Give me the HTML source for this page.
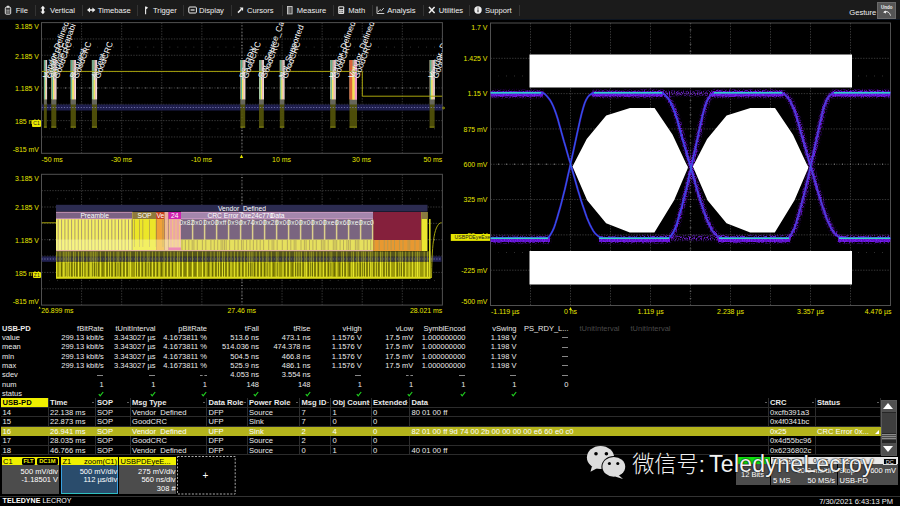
<!DOCTYPE html><html><head><meta charset="utf-8"><title>USB-PD</title><style>
*{margin:0;padding:0;box-sizing:border-box}
html,body{width:900px;height:506px;overflow:hidden;background:#000}
body{position:relative;font-family:"Liberation Sans","Noto Sans CJK SC",sans-serif;font-size:7.5px;color:#e8e8e8;line-height:1}
.a{position:absolute;white-space:nowrap}
.tb{position:absolute;left:0;top:0;width:900px;height:20px;background:#1b1b1b;border-bottom:1px solid #0c1420}
.tb span{position:absolute;top:5.5px;font-size:7.6px;color:#f0f0f0;white-space:nowrap;line-height:9px}
.tb i{position:absolute;top:5px;width:1px;height:11px;background:#333}
.yl{position:absolute;color:#e6e600;font-size:6.95px;line-height:9px;white-space:nowrap}
.r{text-align:right}
.m{position:absolute;font-size:7.5px;line-height:9.33px;white-space:nowrap;color:#eaeaea}
.t{position:absolute;font-size:7.6px;line-height:9.2px;white-space:nowrap;color:#eaeaea}
</style></head><body>
<div class="tb">
<span style="left:15.7px">File</span>
<span style="left:50px">Vertical</span>
<span style="left:97.7px">Timebase</span>
<span style="left:153px">Trigger</span>
<span style="left:199px">Display</span>
<span style="left:247px">Cursors</span>
<span style="left:296.7px">Measure</span>
<span style="left:348.3px">Math</span>
<span style="left:387.3px">Analysis</span>
<span style="left:438.7px">Utilities</span>
<span style="left:485px">Support</span>
<i style="left:34.8px"></i>
<i style="left:82.3px"></i>
<i style="left:137.3px"></i>
<i style="left:183.3px"></i>
<i style="left:230.7px"></i>
<i style="left:281.7px"></i>
<i style="left:333.3px"></i>
<i style="left:371.7px"></i>
<i style="left:423.3px"></i>
<i style="left:469.3px"></i>
<i style="left:519.3px"></i>
<span style="left:849.3px;top:7.5px">Gesture</span>
<div class="a" style="left:877px;top:2px;width:19px;height:17px;background:#555;border:1px solid #6a6a6a"></div>
<span style="left:881px;top:5.2px;font-size:4.5px;line-height:5px;font-weight:bold">Undo</span>
<svg class="a" style="left:0;top:0" width="900" height="20" viewBox="0 0 900 20">
<rect x="5.3" y="7.2" width="5.4" height="7" rx="1" fill="#3a3a3a" stroke="#ddd" stroke-width="1"/><rect x="6.6" y="5.8" width="2.8" height="1.8" rx="0.5" fill="#ddd"/><path d="M6.4 10.2h3.2M6.4 12h3.2" stroke="#ccc" stroke-width="0.8"/>
<path d="M42.9 5.8 L45.3 8.6 H43.9 V11.4 H45.3 L42.9 14.2 L40.5 11.4 H41.9 V8.6 H40.5 Z" fill="#f2f2f2"/>
<path d="M87 10 L90 7.6 V9.3 H92.4 V7.6 L95.4 10 L92.4 12.4 V10.7 H90 V12.4 Z" fill="#eee"/>
<path d="M145.6 14.2 V6.4" fill="none" stroke="#eee" stroke-width="1.1"/><path d="M146 6.4 L148.2 7.8 L146 9.2 Z" fill="#eee"/>
<rect x="188.8" y="7" width="7.6" height="6" rx="1" fill="none" stroke="#eee" stroke-width="1"/><rect x="190.6" y="9.4" width="4" height="1.2" fill="#eee"/>
<path d="M238 12.6 L241.4 9.2" stroke="#eee" stroke-width="1.6"/><path d="M239.6 7.6 L243.2 7.4 L243 11 Z" fill="#eee"/>
<rect x="287.5" y="6.5" width="4.6" height="7.4" fill="#555" stroke="#ccc" stroke-width="0.9"/><path d="M288 8h1.6M288 10h1.6M288 12h1.6" stroke="#ccc" stroke-width="0.7"/>
<rect x="338.2" y="6.2" width="6" height="7.8" rx="1" fill="#ddd"/><rect x="339.3" y="7.3" width="3.8" height="1.8" fill="#222"/><path d="M339.4 10.6h3.6M339.4 12.4h3.6" stroke="#222" stroke-width="0.8" stroke-dasharray="0.9 0.45"/>
<path d="M377 6.5 V13.5 H384.3" fill="none" stroke="#ddd" stroke-width="0.9"/><path d="M378 12 L380 9.6 L381.4 10.8 L383.8 8" fill="none" stroke="#ddd" stroke-width="0.9"/>
<path d="M429 7 L434.6 13 M434.6 7 L429 13" stroke="#eee" stroke-width="1.5"/>
<circle cx="478" cy="10" r="3.7" fill="#eee"/><rect x="477.5" y="9.4" width="1" height="2.8" fill="#222"/><rect x="477.5" y="7.6" width="1" height="1" fill="#222"/>
<path d="M884 12 C886.8 10.9 889.6 11.9 890.5 15.6" fill="none" stroke="#eee" stroke-width="1"/><path d="M883 12.3 L886 10.6 L886 13.4 Z" fill="#eee"/>
</svg>
</div>
<svg class="a" style="left:0;top:0" width="900" height="506" viewBox="0 0 900 506">
<defs>
<clipPath id="c1"><rect x="41.5" y="22.6" width="400.9" height="130.7"/></clipPath>
<clipPath id="c2"><rect x="41.5" y="174.3" width="400.9" height="130.8"/></clipPath>
<clipPath id="c3"><rect x="490.5" y="23" width="400" height="282.5"/></clipPath>
<filter id="bl" x="-5%" y="-5%" width="110%" height="110%"><feGaussianBlur stdDeviation="0.7"/></filter>
<filter id="sp" x="-5%" y="-5%" width="110%" height="110%"><feGaussianBlur stdDeviation="0.9" result="b"/><feTurbulence type="fractalNoise" baseFrequency="0.85" numOctaves="1" seed="4" result="n"/><feColorMatrix in="n" type="matrix" values="0 0 0 0 0  0 0 0 0 0  0 0 0 0 0  0 0 0 5 -2.2" result="m"/><feComposite in="b" in2="m" operator="in"/></filter>
</defs>
<path d="M81.59 22.6 V153.29999999999998" stroke="#363636" stroke-width="1" stroke-dasharray="1.4 1.3"/><path d="M121.68 22.6 V153.29999999999998" stroke="#363636" stroke-width="1" stroke-dasharray="1.4 1.3"/><path d="M161.77 22.6 V153.29999999999998" stroke="#363636" stroke-width="1" stroke-dasharray="1.4 1.3"/><path d="M201.86 22.6 V153.29999999999998" stroke="#363636" stroke-width="1" stroke-dasharray="1.4 1.3"/><path d="M241.95 22.6 V153.29999999999998" stroke="#363636" stroke-width="1" stroke-dasharray="1.4 1.3"/><path d="M282.04 22.6 V153.29999999999998" stroke="#363636" stroke-width="1" stroke-dasharray="1.4 1.3"/><path d="M322.13 22.6 V153.29999999999998" stroke="#363636" stroke-width="1" stroke-dasharray="1.4 1.3"/><path d="M362.22 22.6 V153.29999999999998" stroke="#363636" stroke-width="1" stroke-dasharray="1.4 1.3"/><path d="M402.31 22.6 V153.29999999999998" stroke="#363636" stroke-width="1" stroke-dasharray="1.4 1.3"/><path d="M41.5 38.94 H442.4" stroke="#363636" stroke-width="1" stroke-dasharray="1.4 1.3"/><path d="M41.5 55.27 H442.4" stroke="#363636" stroke-width="1" stroke-dasharray="1.4 1.3"/><path d="M41.5 71.61 H442.4" stroke="#363636" stroke-width="1" stroke-dasharray="1.4 1.3"/><path d="M41.5 87.95 H442.4" stroke="#363636" stroke-width="1" stroke-dasharray="1.4 1.3"/><path d="M41.5 104.29 H442.4" stroke="#363636" stroke-width="1" stroke-dasharray="1.4 1.3"/><path d="M41.5 120.62 H442.4" stroke="#363636" stroke-width="1" stroke-dasharray="1.4 1.3"/><path d="M41.5 136.96 H442.4" stroke="#363636" stroke-width="1" stroke-dasharray="1.4 1.3"/><path d="M41.5 87.95 H442.4" stroke="#6a6a6a" stroke-width="1.6" stroke-dasharray="0.9 7.12" stroke-dashoffset="0.45"/><path d="M241.95 22.6 V153.29999999999998" stroke="#6a6a6a" stroke-width="1.6" stroke-dasharray="0.9 2.37" stroke-dashoffset="0.45"/><path d="M49.52 47.11 H441.4" stroke="#3c3c3c" stroke-width="0.9" stroke-dasharray="0.9 7.12" stroke-dashoffset="0.45"/><path d="M49.52 128.79 H441.4" stroke="#3c3c3c" stroke-width="0.9" stroke-dasharray="0.9 7.12" stroke-dashoffset="0.45"/><rect x="41.5" y="22.6" width="400.9" height="130.7" fill="none" stroke="#505050" stroke-width="1"/>
<g clip-path="url(#c1)">
<rect x="41.5" y="104.5" width="401" height="6" fill="#1e1e4c"/>
<rect x="43.9" y="100" width="2.9" height="27.5" fill="#58580a" opacity="0.88"/>
<rect x="43.9" y="126.6" width="2.9" height="1" fill="#8c8c14"/>
<rect x="43.9" y="60" width="2.9" height="39.6" fill="#e9dfb4"/>
<rect x="43.9" y="60" width="2.9" height="11" fill="#8a947a" opacity="0.75"/>
<rect x="44.6" y="80" width="1.2" height="19.6" fill="#f2e868"/>
<rect x="45.7" y="60" width="0.9" height="39.6" fill="#f0b4c4" opacity="0.9"/>
<rect x="44.2" y="60" width="0.9" height="39.6" fill="#48b090"/>
<rect x="46.5" y="60" width="0.6" height="39.6" fill="#fff" opacity="0.8"/>
<rect x="43.9" y="99.6" width="2.9" height="4.9" fill="#66665c"/>
<rect x="51.3" y="100" width="5.0" height="27.5" fill="#58580a" opacity="0.88"/>
<rect x="51.3" y="126.6" width="5.0" height="1" fill="#8c8c14"/>
<rect x="51.3" y="60" width="5.0" height="39.6" fill="#e9dfb4"/>
<rect x="51.3" y="60" width="5.0" height="11" fill="#8a947a" opacity="0.75"/>
<rect x="52.5" y="80" width="2.0" height="19.6" fill="#f2e868"/>
<rect x="54.4" y="60" width="1.5" height="39.6" fill="#f0b4c4" opacity="0.9"/>
<rect x="51.9" y="60" width="0.9" height="39.6" fill="#48b090"/>
<rect x="55.8" y="60" width="0.6" height="39.6" fill="#fff" opacity="0.8"/>
<rect x="51.3" y="99.6" width="5.0" height="4.9" fill="#66665c"/>
<rect x="70.6" y="100" width="5.3" height="27.5" fill="#58580a" opacity="0.88"/>
<rect x="70.6" y="126.6" width="5.3" height="1" fill="#8c8c14"/>
<rect x="70.6" y="60" width="5.3" height="39.6" fill="#e9dfb4"/>
<rect x="70.6" y="60" width="5.3" height="11" fill="#8a947a" opacity="0.75"/>
<rect x="71.9" y="80" width="2.1" height="19.6" fill="#f2e868"/>
<rect x="73.9" y="60" width="1.6" height="39.6" fill="#f0b4c4" opacity="0.9"/>
<rect x="71.2" y="60" width="0.9" height="39.6" fill="#48b090"/>
<rect x="75.4" y="60" width="0.6" height="39.6" fill="#fff" opacity="0.8"/>
<rect x="70.6" y="99.6" width="5.3" height="4.9" fill="#66665c"/>
<rect x="91.9" y="100" width="5.1" height="27.5" fill="#58580a" opacity="0.88"/>
<rect x="91.9" y="126.6" width="5.1" height="1" fill="#8c8c14"/>
<rect x="91.9" y="60" width="5.1" height="39.6" fill="#e9dfb4"/>
<rect x="91.9" y="60" width="5.1" height="11" fill="#8a947a" opacity="0.75"/>
<rect x="93.2" y="80" width="2.0" height="19.6" fill="#f2e868"/>
<rect x="95.1" y="60" width="1.5" height="39.6" fill="#f0b4c4" opacity="0.9"/>
<rect x="92.5" y="60" width="0.9" height="39.6" fill="#48b090"/>
<rect x="96.5" y="60" width="0.6" height="39.6" fill="#fff" opacity="0.8"/>
<rect x="91.9" y="99.6" width="5.1" height="4.9" fill="#66665c"/>
<rect x="240.4" y="100" width="4.8" height="27.5" fill="#58580a" opacity="0.88"/>
<rect x="240.4" y="126.6" width="4.8" height="1" fill="#8c8c14"/>
<rect x="240.4" y="60" width="4.8" height="39.6" fill="#e9dfb4"/>
<rect x="240.4" y="60" width="4.8" height="11" fill="#8a947a" opacity="0.75"/>
<rect x="241.6" y="80" width="1.9" height="19.6" fill="#f2e868"/>
<rect x="243.4" y="60" width="1.4" height="39.6" fill="#f0b4c4" opacity="0.9"/>
<rect x="241.0" y="60" width="0.9" height="39.6" fill="#48b090"/>
<rect x="244.7" y="60" width="0.6" height="39.6" fill="#fff" opacity="0.8"/>
<rect x="240.4" y="99.6" width="4.8" height="4.9" fill="#66665c"/>
<rect x="259" y="100" width="4.8" height="27.5" fill="#58580a" opacity="0.88"/>
<rect x="259" y="126.6" width="4.8" height="1" fill="#8c8c14"/>
<rect x="259" y="60" width="4.8" height="39.6" fill="#e9dfb4"/>
<rect x="259" y="60" width="4.8" height="11" fill="#8a947a" opacity="0.75"/>
<rect x="260.2" y="80" width="1.9" height="19.6" fill="#f2e868"/>
<rect x="262.0" y="60" width="1.4" height="39.6" fill="#f0b4c4" opacity="0.9"/>
<rect x="259.6" y="60" width="0.9" height="39.6" fill="#48b090"/>
<rect x="263.3" y="60" width="0.6" height="39.6" fill="#fff" opacity="0.8"/>
<rect x="259" y="99.6" width="4.8" height="4.9" fill="#66665c"/>
<rect x="279.8" y="100" width="4.5" height="27.5" fill="#58580a" opacity="0.88"/>
<rect x="279.8" y="126.6" width="4.5" height="1" fill="#8c8c14"/>
<rect x="279.8" y="60" width="4.5" height="39.6" fill="#e9dfb4"/>
<rect x="279.8" y="60" width="4.5" height="11" fill="#8a947a" opacity="0.75"/>
<rect x="280.9" y="80" width="1.8" height="19.6" fill="#f2e868"/>
<rect x="282.6" y="60" width="1.3" height="39.6" fill="#f0b4c4" opacity="0.9"/>
<rect x="280.3" y="60" width="0.9" height="39.6" fill="#48b090"/>
<rect x="283.9" y="60" width="0.6" height="39.6" fill="#fff" opacity="0.8"/>
<rect x="279.8" y="99.6" width="4.5" height="4.9" fill="#66665c"/>
<rect x="330.2" y="100" width="5.4" height="27.5" fill="#58580a" opacity="0.88"/>
<rect x="330.2" y="126.6" width="5.4" height="1" fill="#8c8c14"/>
<rect x="330.2" y="60" width="5.4" height="39.6" fill="#e9dfb4"/>
<rect x="330.2" y="60" width="5.4" height="11" fill="#8a947a" opacity="0.75"/>
<rect x="331.6" y="80" width="2.2" height="19.6" fill="#f2e868"/>
<rect x="333.5" y="60" width="1.6" height="39.6" fill="#f0b4c4" opacity="0.9"/>
<rect x="330.8" y="60" width="0.9" height="39.6" fill="#48b090"/>
<rect x="335.1" y="60" width="0.6" height="39.6" fill="#fff" opacity="0.8"/>
<rect x="330.2" y="99.6" width="5.4" height="4.9" fill="#66665c"/>
<rect x="349.5" y="100" width="7.5" height="27.5" fill="#58580a" opacity="0.88"/>
<rect x="349.5" y="126.6" width="7.5" height="1" fill="#8c8c14"/>
<rect x="349.5" y="60" width="7.5" height="39.6" fill="#e9dfb4"/>
<rect x="349.5" y="60" width="7.5" height="11" fill="#8a947a" opacity="0.75"/>
<rect x="351.4" y="80" width="3.0" height="19.6" fill="#f2e868"/>
<rect x="354.1" y="60" width="2.2" height="39.6" fill="#f0b4c4" opacity="0.9"/>
<rect x="350.4" y="60" width="0.9" height="39.6" fill="#48b090"/>
<rect x="356.2" y="60" width="0.6" height="39.6" fill="#fff" opacity="0.8"/>
<rect x="349.5" y="99.6" width="7.5" height="4.9" fill="#66665c"/>
<rect x="429.6" y="100" width="5.0" height="27.5" fill="#58580a" opacity="0.88"/>
<rect x="429.6" y="126.6" width="5.0" height="1" fill="#8c8c14"/>
<rect x="429.6" y="60" width="5.0" height="39.6" fill="#e9dfb4"/>
<rect x="429.6" y="60" width="5.0" height="11" fill="#8a947a" opacity="0.75"/>
<rect x="430.9" y="80" width="2.0" height="19.6" fill="#f2e868"/>
<rect x="432.7" y="60" width="1.5" height="39.6" fill="#f0b4c4" opacity="0.9"/>
<rect x="430.2" y="60" width="0.9" height="39.6" fill="#48b090"/>
<rect x="434.1" y="60" width="0.6" height="39.6" fill="#fff" opacity="0.8"/>
<rect x="429.6" y="99.6" width="5.0" height="4.9" fill="#66665c"/>
<rect x="349.5" y="60" width="3" height="39.6" fill="#e45a30" opacity="0.9"/>
<rect x="352.5" y="66" width="2.3" height="33.6" fill="#f4e050"/>
<rect x="354.8" y="60" width="2.2" height="39.6" fill="#f08cc0" opacity="0.9"/>
<path d="M41.5 107.5 H442.4" stroke="#8080bc" stroke-width="0.8" stroke-dasharray="1.2 1.6"/>
<path d="M41.5 71.4 H362.3 V96.2 H442.4" fill="none" stroke="#a8a40c" stroke-width="1"/>
<text x="48.1" y="79" transform="rotate(-69.5 48.1 79)" font-size="8.4" fill="#fff" stroke="#000" stroke-width="0.2" paint-order="stroke">Vendor_Defined</text>
<text x="50.6" y="79" transform="rotate(-69.5 50.6 79)" font-size="8.4" fill="#fff" stroke="#000" stroke-width="0.2" paint-order="stroke">GoodCRC</text>
<text x="55.6" y="79" transform="rotate(-69.5 55.6 79)" font-size="8.4" fill="#fff" stroke="#000" stroke-width="0.2" paint-order="stroke">Source_Capabi</text>
<text x="58.6" y="79" transform="rotate(-69.5 58.6 79)" font-size="8.4" fill="#fff" stroke="#000" stroke-width="0.2" paint-order="stroke">GoodCRC</text>
<text x="75.1" y="79" transform="rotate(-69.5 75.1 79)" font-size="8.4" fill="#fff" stroke="#000" stroke-width="0.2" paint-order="stroke">Request</text>
<text x="78.1" y="79" transform="rotate(-69.5 78.1 79)" font-size="8.4" fill="#fff" stroke="#000" stroke-width="0.2" paint-order="stroke">GoodCRC</text>
<text x="96.6" y="79" transform="rotate(-69.5 96.6 79)" font-size="8.4" fill="#fff" stroke="#000" stroke-width="0.2" paint-order="stroke">Accept</text>
<text x="99.6" y="79" transform="rotate(-69.5 99.6 79)" font-size="8.4" fill="#fff" stroke="#000" stroke-width="0.2" paint-order="stroke">GoodCRC</text>
<text x="244.6" y="79" transform="rotate(-69.5 244.6 79)" font-size="8.4" fill="#fff" stroke="#000" stroke-width="0.2" paint-order="stroke">PS_RDY</text>
<text x="247.6" y="79" transform="rotate(-69.5 247.6 79)" font-size="8.4" fill="#fff" stroke="#000" stroke-width="0.2" paint-order="stroke">GoodCRC</text>
<text x="263.1" y="79" transform="rotate(-69.5 263.1 79)" font-size="8.4" fill="#fff" stroke="#000" stroke-width="0.2" paint-order="stroke">Get_Source_Ca</text>
<text x="266.1" y="79" transform="rotate(-69.5 266.1 79)" font-size="8.4" fill="#fff" stroke="#000" stroke-width="0.2" paint-order="stroke">GoodCRC</text>
<text x="284.1" y="79" transform="rotate(-69.5 284.1 79)" font-size="8.4" fill="#fff" stroke="#000" stroke-width="0.2" paint-order="stroke">Not_Supported</text>
<text x="287.1" y="79" transform="rotate(-69.5 287.1 79)" font-size="8.4" fill="#fff" stroke="#000" stroke-width="0.2" paint-order="stroke">GoodCRC</text>
<text x="334.6" y="79" transform="rotate(-69.5 334.6 79)" font-size="8.4" fill="#fff" stroke="#000" stroke-width="0.2" paint-order="stroke">Vendor_Defined</text>
<text x="338.1" y="79" transform="rotate(-69.5 338.1 79)" font-size="8.4" fill="#fff" stroke="#000" stroke-width="0.2" paint-order="stroke">GoodCRC</text>
<text x="353.6" y="79" transform="rotate(-69.5 353.6 79)" font-size="8.4" fill="#fff" stroke="#000" stroke-width="0.2" paint-order="stroke">Vendor_Defined</text>
<text x="358.6" y="79" transform="rotate(-69.5 358.6 79)" font-size="8.4" fill="#fff" stroke="#000" stroke-width="0.2" paint-order="stroke">GoodCRC</text>
<text x="433.6" y="79" transform="rotate(-69.5 433.6 79)" font-size="8.4" fill="#fff" stroke="#000" stroke-width="0.2" paint-order="stroke">Vendor_Defined</text>
<text x="437.6" y="79" transform="rotate(-69.5 437.6 79)" font-size="8.4" fill="#fff" stroke="#000" stroke-width="0.2" paint-order="stroke">GoodCRC</text>
</g>
<path d="M241.5 154.6 L243.2 158 H239.8 Z" fill="#e6e600"/>
<circle cx="443.6" cy="108" r="0.9" fill="none" stroke="#e6e600" stroke-width="0.6"/>
<path d="M81.59 174.3 V305.1" stroke="#363636" stroke-width="1" stroke-dasharray="1.4 1.3"/><path d="M121.68 174.3 V305.1" stroke="#363636" stroke-width="1" stroke-dasharray="1.4 1.3"/><path d="M161.77 174.3 V305.1" stroke="#363636" stroke-width="1" stroke-dasharray="1.4 1.3"/><path d="M201.86 174.3 V305.1" stroke="#363636" stroke-width="1" stroke-dasharray="1.4 1.3"/><path d="M241.95 174.3 V305.1" stroke="#363636" stroke-width="1" stroke-dasharray="1.4 1.3"/><path d="M282.04 174.3 V305.1" stroke="#363636" stroke-width="1" stroke-dasharray="1.4 1.3"/><path d="M322.13 174.3 V305.1" stroke="#363636" stroke-width="1" stroke-dasharray="1.4 1.3"/><path d="M362.22 174.3 V305.1" stroke="#363636" stroke-width="1" stroke-dasharray="1.4 1.3"/><path d="M402.31 174.3 V305.1" stroke="#363636" stroke-width="1" stroke-dasharray="1.4 1.3"/><path d="M41.5 190.65 H442.4" stroke="#363636" stroke-width="1" stroke-dasharray="1.4 1.3"/><path d="M41.5 207.00 H442.4" stroke="#363636" stroke-width="1" stroke-dasharray="1.4 1.3"/><path d="M41.5 223.35 H442.4" stroke="#363636" stroke-width="1" stroke-dasharray="1.4 1.3"/><path d="M41.5 239.70 H442.4" stroke="#363636" stroke-width="1" stroke-dasharray="1.4 1.3"/><path d="M41.5 256.05 H442.4" stroke="#363636" stroke-width="1" stroke-dasharray="1.4 1.3"/><path d="M41.5 272.40 H442.4" stroke="#363636" stroke-width="1" stroke-dasharray="1.4 1.3"/><path d="M41.5 288.75 H442.4" stroke="#363636" stroke-width="1" stroke-dasharray="1.4 1.3"/><path d="M41.5 239.70 H442.4" stroke="#6a6a6a" stroke-width="1.6" stroke-dasharray="0.9 7.12" stroke-dashoffset="0.45"/><path d="M241.95 174.3 V305.1" stroke="#6a6a6a" stroke-width="1.6" stroke-dasharray="0.9 2.37" stroke-dashoffset="0.45"/><path d="M49.52 198.83 H441.4" stroke="#3c3c3c" stroke-width="0.9" stroke-dasharray="0.9 7.12" stroke-dashoffset="0.45"/><path d="M49.52 280.58 H441.4" stroke="#3c3c3c" stroke-width="0.9" stroke-dasharray="0.9 7.12" stroke-dashoffset="0.45"/><rect x="41.5" y="174.3" width="400.9" height="130.8" fill="none" stroke="#505050" stroke-width="1"/>
<g clip-path="url(#c2)">
<path d="M41.5 222.8 H56" stroke="#a8a40c" stroke-width="1"/>
<rect x="41.5" y="256.4" width="400" height="5.4" fill="#212152"/>
<path d="M41.5 259 H441.5" stroke="#8c8cc4" stroke-width="0.8" stroke-dasharray="1.2 1.6"/>
<rect x="56" y="251.2" width="374.5" height="5.4" fill="#55551a"/>
<rect x="56" y="256.4" width="374.5" height="5.4" fill="#55551e" opacity="0.5"/>
<rect x="56" y="261.8" width="374.5" height="16.8" fill="#9a980a"/>
<path d="M56.6 251.5 V262 M60.0 251.5 V262 M63.3 251.5 V262 M65.0 251.5 V262 M66.7 251.5 V262 M68.4 251.5 V262 M70.1 251.5 V262 M73.5 251.5 V262 M75.2 251.5 V262 M78.5 251.5 V262 M81.8 251.5 V262 M83.5 251.5 V262 M86.9 251.5 V262 M90.2 251.5 V262 M91.9 251.5 V262 M93.6 251.5 V262 M95.3 251.5 V262 M97.0 251.5 V262 M100.4 251.5 V262 M105.4 251.5 V262 M108.7 251.5 V262 M110.4 251.5 V262 M113.8 251.5 V262 M117.1 251.5 V262 M118.8 251.5 V262 M122.2 251.5 V262 M125.5 251.5 V262 M128.9 251.5 V262 M130.6 251.5 V262 M135.6 251.5 V262 M137.3 251.5 V262 M140.6 251.5 V262 M144.0 251.5 V262 M147.3 251.5 V262 M149.0 251.5 V262 M152.4 251.5 V262 M155.7 251.5 V262 M159.1 251.5 V262 M164.1 251.5 V262 M167.4 251.5 V262 M170.8 251.5 V262 M174.1 251.5 V262 M177.5 251.5 V262 M179.2 251.5 V262 M182.5 251.5 V262 M187.5 251.5 V262 M192.5 251.5 V262 M197.5 251.5 V262 M202.5 251.5 V262 M205.9 251.5 V262 M210.9 251.5 V262 M214.2 251.5 V262 M217.6 251.5 V262 M219.3 251.5 V262 M222.6 251.5 V262 M224.3 251.5 V262 M227.7 251.5 V262 M231.0 251.5 V262 M234.4 251.5 V262 M237.7 251.5 V262 M241.1 251.5 V262 M244.4 251.5 V262 M247.8 251.5 V262 M249.5 251.5 V262 M251.2 251.5 V262 M252.9 251.5 V262 M256.2 251.5 V262 M259.6 251.5 V262 M262.9 251.5 V262 M266.3 251.5 V262 M268.0 251.5 V262 M271.3 251.5 V262 M276.3 251.5 V262 M278.0 251.5 V262 M283.0 251.5 V262 M286.4 251.5 V262 M289.7 251.5 V262 M294.7 251.5 V262 M296.4 251.5 V262 M298.1 251.5 V262 M299.8 251.5 V262 M301.5 251.5 V262 M304.9 251.5 V262 M306.6 251.5 V262 M309.9 251.5 V262 M311.6 251.5 V262 M313.3 251.5 V262 M316.7 251.5 V262 M320.0 251.5 V262 M323.4 251.5 V262 M326.7 251.5 V262 M330.1 251.5 V262 M331.8 251.5 V262 M336.8 251.5 V262 M341.8 251.5 V262 M343.5 251.5 V262 M346.8 251.5 V262 M351.8 251.5 V262 M353.5 251.5 V262 M356.9 251.5 V262 M358.6 251.5 V262 M361.9 251.5 V262 M363.6 251.5 V262 M365.3 251.5 V262 M368.7 251.5 V262 M370.4 251.5 V262 M372.1 251.5 V262 M375.4 251.5 V262 M377.1 251.5 V262 M380.5 251.5 V262 M382.2 251.5 V262 M385.6 251.5 V262 M387.2 251.5 V262 M390.6 251.5 V262 M395.6 251.5 V262 M399.0 251.5 V262 M400.7 251.5 V262 M402.4 251.5 V262 M405.7 251.5 V262 M409.1 251.5 V262 M412.4 251.5 V262 M415.8 251.5 V262 M417.5 251.5 V262 M419.2 251.5 V262 M424.2 251.5 V262 M427.5 251.5 V262" stroke="#d8d828" stroke-width="0.7" opacity="0.7"/>
<path d="M56.6 262 V278 M60.0 262 V278 M63.3 262 V278 M65.0 262 V278 M66.7 262 V278 M68.4 262 V278 M70.1 262 V278 M73.5 262 V278 M75.2 262 V278 M78.5 262 V278 M81.8 262 V278 M83.5 262 V278 M86.9 262 V278 M90.2 262 V278 M91.9 262 V278 M93.6 262 V278 M95.3 262 V278 M97.0 262 V278 M100.4 262 V278 M105.4 262 V278 M108.7 262 V278 M110.4 262 V278 M113.8 262 V278 M117.1 262 V278 M118.8 262 V278 M122.2 262 V278 M125.5 262 V278 M128.9 262 V278 M130.6 262 V278 M135.6 262 V278 M137.3 262 V278 M140.6 262 V278 M144.0 262 V278 M147.3 262 V278 M149.0 262 V278 M152.4 262 V278 M155.7 262 V278 M159.1 262 V278 M164.1 262 V278 M167.4 262 V278 M170.8 262 V278 M174.1 262 V278 M177.5 262 V278 M179.2 262 V278 M182.5 262 V278 M187.5 262 V278 M192.5 262 V278 M197.5 262 V278 M202.5 262 V278 M205.9 262 V278 M210.9 262 V278 M214.2 262 V278 M217.6 262 V278 M219.3 262 V278 M222.6 262 V278 M224.3 262 V278 M227.7 262 V278 M231.0 262 V278 M234.4 262 V278 M237.7 262 V278 M241.1 262 V278 M244.4 262 V278 M247.8 262 V278 M249.5 262 V278 M251.2 262 V278 M252.9 262 V278 M256.2 262 V278 M259.6 262 V278 M262.9 262 V278 M266.3 262 V278 M268.0 262 V278 M271.3 262 V278 M276.3 262 V278 M278.0 262 V278 M283.0 262 V278 M286.4 262 V278 M289.7 262 V278 M294.7 262 V278 M296.4 262 V278 M298.1 262 V278 M299.8 262 V278 M301.5 262 V278 M304.9 262 V278 M306.6 262 V278 M309.9 262 V278 M311.6 262 V278 M313.3 262 V278 M316.7 262 V278 M320.0 262 V278 M323.4 262 V278 M326.7 262 V278 M330.1 262 V278 M331.8 262 V278 M336.8 262 V278 M341.8 262 V278 M343.5 262 V278 M346.8 262 V278 M351.8 262 V278 M353.5 262 V278 M356.9 262 V278 M358.6 262 V278 M361.9 262 V278 M363.6 262 V278 M365.3 262 V278 M368.7 262 V278 M370.4 262 V278 M372.1 262 V278 M375.4 262 V278 M377.1 262 V278 M380.5 262 V278 M382.2 262 V278 M385.6 262 V278 M387.2 262 V278 M390.6 262 V278 M395.6 262 V278 M399.0 262 V278 M400.7 262 V278 M402.4 262 V278 M405.7 262 V278 M409.1 262 V278 M412.4 262 V278 M415.8 262 V278 M417.5 262 V278 M419.2 262 V278 M424.2 262 V278 M427.5 262 V278" stroke="#f0f030" stroke-width="1" opacity="0.9"/>
<path d="M61.6 262.5 V276.4 M65.8 262.5 V276.4 M69.2 262.5 V276.4 M71.8 262.5 V276.4 M74.3 262.5 V276.4 M76.8 262.5 V276.4 M80.2 262.5 V276.4 M82.7 262.5 V276.4 M88.6 262.5 V276.4 M92.8 262.5 V276.4 M94.5 262.5 V276.4 M96.2 262.5 V276.4 M98.7 262.5 V276.4 M102.9 262.5 V276.4 M107.1 262.5 V276.4 M109.6 262.5 V276.4 M112.1 262.5 V276.4 M115.5 262.5 V276.4 M118.0 262.5 V276.4 M120.5 262.5 V276.4 M123.9 262.5 V276.4 M127.2 262.5 V276.4 M136.4 262.5 V276.4 M139.0 262.5 V276.4 M142.3 262.5 V276.4 M145.7 262.5 V276.4 M148.2 262.5 V276.4 M150.7 262.5 V276.4 M154.1 262.5 V276.4 M157.4 262.5 V276.4 M161.6 262.5 V276.4 M165.8 262.5 V276.4 M169.1 262.5 V276.4 M172.5 262.5 V276.4 M180.9 262.5 V276.4 M185.0 262.5 V276.4 M190.0 262.5 V276.4 M195.0 262.5 V276.4 M204.2 262.5 V276.4 M208.4 262.5 V276.4 M212.6 262.5 V276.4 M215.9 262.5 V276.4 M218.4 262.5 V276.4 M221.0 262.5 V276.4 M223.5 262.5 V276.4 M226.0 262.5 V276.4 M229.4 262.5 V276.4 M239.4 262.5 V276.4 M242.8 262.5 V276.4 M248.6 262.5 V276.4 M250.3 262.5 V276.4 M252.0 262.5 V276.4 M254.6 262.5 V276.4 M257.9 262.5 V276.4 M261.3 262.5 V276.4 M264.6 262.5 V276.4 M267.1 262.5 V276.4 M273.8 262.5 V276.4 M277.2 262.5 V276.4 M284.7 262.5 V276.4 M288.1 262.5 V276.4 M292.2 262.5 V276.4 M295.6 262.5 V276.4 M297.3 262.5 V276.4 M299.0 262.5 V276.4 M300.7 262.5 V276.4 M303.2 262.5 V276.4 M308.3 262.5 V276.4 M310.8 262.5 V276.4 M312.5 262.5 V276.4 M315.0 262.5 V276.4 M318.4 262.5 V276.4 M325.1 262.5 V276.4 M328.4 262.5 V276.4 M330.9 262.5 V276.4 M334.3 262.5 V276.4 M339.3 262.5 V276.4 M342.6 262.5 V276.4 M345.2 262.5 V276.4 M349.3 262.5 V276.4 M357.8 262.5 V276.4 M360.3 262.5 V276.4 M362.8 262.5 V276.4 M364.5 262.5 V276.4 M367.0 262.5 V276.4 M369.6 262.5 V276.4 M373.8 262.5 V276.4 M376.3 262.5 V276.4 M378.8 262.5 V276.4 M383.9 262.5 V276.4 M386.4 262.5 V276.4 M388.9 262.5 V276.4 M397.3 262.5 V276.4 M399.8 262.5 V276.4 M401.5 262.5 V276.4 M404.0 262.5 V276.4" stroke="#4c4c02" stroke-width="0.8" opacity="0.85"/>
<rect x="56" y="276.8" width="374.5" height="1.8" fill="#dcdc1c"/>
<rect x="56" y="204.8" width="371.5" height="6.8" fill="#2b2b50"/>
<rect x="56" y="212" width="76.5" height="39" fill="#f4f062"/>
<rect x="56" y="211.8" width="76.5" height="7.4" fill="#e0a4c4"/><rect x="56" y="212.6" width="76.5" height="5.8" fill="#7c6284"/>
<rect x="132.5" y="212" width="23.7" height="39" fill="#ece628"/>
<rect x="132.5" y="212" width="23.7" height="7" fill="#8f7a3c"/>
<rect x="156.2" y="212" width="8.3" height="39" fill="#f0a038"/>
<rect x="156.2" y="212" width="8.3" height="7" fill="#c8401c"/>
<rect x="164.5" y="212" width="4" height="39" fill="#eeb0a0"/>
<rect x="168.5" y="212" width="12.5" height="39" fill="#eca4a8"/>
<rect x="168.5" y="212" width="12.5" height="7" fill="#d020b0"/>
<rect x="168.5" y="247.5" width="12.5" height="3.5" fill="#e030c0"/>
<rect x="181" y="212" width="192.2" height="39" fill="#7a6580"/>
<rect x="181" y="211.8" width="192.2" height="7.4" fill="#d8a0c8"/><rect x="181" y="212.6" width="192.2" height="5.8" fill="#a486ac"/>
<rect x="373.2" y="212" width="48.1" height="39" fill="#85203c"/>
<rect x="421.3" y="212" width="6.2" height="39" fill="#ece630"/>
<rect x="421.3" y="212" width="6.2" height="7" fill="#8a7a40"/>
<path d="M58.2 219.5 V250 M61.6 219.5 V250 M64.9 219.5 V250 M68.2 219.5 V250 M71.6 219.5 V250 M74.9 219.5 V250 M78.3 219.5 V250 M81.6 219.5 V250 M85.0 219.5 V250 M88.3 219.5 V250 M91.7 219.5 V250 M95.0 219.5 V250 M98.4 219.5 V250 M101.7 219.5 V250 M105.1 219.5 V250 M108.4 219.5 V250 M111.8 219.5 V250 M115.1 219.5 V250 M118.5 219.5 V250 M121.8 219.5 V250 M125.2 219.5 V250 M128.5 219.5 V250 M131.9 219.5 V250" stroke="#9c8470" stroke-width="0.8"/>
<path d="M134.5 219.5 V247 M139.5 219.5 V247 M142.8 219.5 V247 M149.5 219.5 V247 M156.2 219.5 V247 M162.9 219.5 V247" stroke="#a08a50" stroke-width="0.6"/>
<path d="M166.0 219.5 V247 M169.3 219.5 V247 M172.7 219.5 V247 M176.0 219.5 V247 M179.4 219.5 V247" stroke="#f0d070" stroke-width="0.8"/>
<rect x="56" y="239.5" width="125" height="10.5" fill="#fbfba8" opacity="0.45"/>
<rect x="181" y="239.5" width="192.2" height="10.7" fill="#e6e05e"/>
<rect x="373.2" y="240" width="48.1" height="11" fill="#e89830"/>
<path d="M182.0 240 V250 M185.4 240 V250 M188.8 240 V250 M192.2 240 V250 M193.9 240 V250 M197.3 240 V250 M202.4 240 V250 M205.8 240 V250 M210.9 240 V250 M214.3 240 V250 M217.7 240 V250 M221.1 240 V250 M222.8 240 V250 M224.5 240 V250 M226.2 240 V250 M229.6 240 V250 M234.7 240 V250 M238.1 240 V250 M241.5 240 V250 M243.2 240 V250 M246.6 240 V250 M250.0 240 V250 M253.4 240 V250 M256.8 240 V250 M260.2 240 V250 M263.6 240 V250 M268.7 240 V250 M272.1 240 V250 M273.8 240 V250 M277.2 240 V250 M282.3 240 V250 M287.4 240 V250 M290.8 240 V250 M294.2 240 V250 M295.9 240 V250 M301.0 240 V250 M304.4 240 V250 M306.1 240 V250 M309.5 240 V250 M312.9 240 V250 M316.3 240 V250 M321.4 240 V250 M323.1 240 V250 M324.8 240 V250 M328.2 240 V250 M333.3 240 V250 M335.0 240 V250 M336.7 240 V250 M340.1 240 V250 M343.5 240 V250 M346.9 240 V250 M348.6 240 V250 M350.3 240 V250 M355.4 240 V250 M357.1 240 V250 M358.8 240 V250 M363.9 240 V250 M367.3 240 V250 M370.7 240 V250 M374.1 240 V250 M379.2 240 V250 M384.3 240 V250 M387.7 240 V250 M391.1 240 V250 M394.5 240 V250 M399.6 240 V250 M403.0 240 V250 M408.1 240 V250 M409.8 240 V250 M414.9 240 V250 M420.0 240 V250" stroke="#a89858" stroke-width="0.7"/>
<path d="M192.6 219.5 V240 M204.6 219.5 V240 M216.6 219.5 V240 M228.6 219.5 V240 M240.6 219.5 V240 M252.6 219.5 V240 M264.6 219.5 V240 M276.6 219.5 V240 M288.6 219.5 V240 M300.6 219.5 V240 M312.6 219.5 V240 M324.6 219.5 V240 M336.6 219.5 V240 M348.6 219.5 V240 M360.6 219.5 V240 M372.6 219.5 V240" stroke="#dccf8c" stroke-width="1.5"/>
<rect x="56" y="250" width="317.2" height="1.2" fill="#e2b4a0"/>
<path d="M429.8 219 V278" stroke="#d8d820" stroke-width="1.6"/>
<path d="M431.5 278 C432 250 433 224 441.5 222.6" fill="none" stroke="#b8b410" stroke-width="0.9"/>
<text x="242" y="210.5" font-size="6.7" fill="#fff" text-anchor="middle">Vendor_Defined</text>
<text x="94.7" y="218.2" font-size="6.7" fill="#fff" text-anchor="middle">Preamble</text>
<text x="144.5" y="218.2" font-size="6.7" fill="#fff" text-anchor="middle">SOP</text>
<text x="160.4" y="218.2" font-size="6.7" fill="#fff" text-anchor="middle">Ve</text>
<text x="174.8" y="218.2" font-size="6.7" fill="#fff" text-anchor="middle">24</text>
<text x="240.3" y="218.2" font-size="6.7" fill="#fff" text-anchor="middle">CRC Error 0xe24c770</text>
<text x="277.5" y="218.2" font-size="6.7" fill="#fff" text-anchor="middle">Data</text>
<text x="179.6" y="225.4" font-size="6.7" fill="#fff" stroke="#222" stroke-width="0.2" paint-order="stroke">0x82</text>
<text x="191.6" y="225.4" font-size="6.7" fill="#fff" stroke="#222" stroke-width="0.2" paint-order="stroke">0x01</text>
<text x="203.6" y="225.4" font-size="6.7" fill="#fff" stroke="#222" stroke-width="0.2" paint-order="stroke">0x00</text>
<text x="215.6" y="225.4" font-size="6.7" fill="#fff" stroke="#222" stroke-width="0.2" paint-order="stroke">0xff</text>
<text x="227.6" y="225.4" font-size="6.7" fill="#fff" stroke="#222" stroke-width="0.2" paint-order="stroke">0x9d</text>
<text x="239.6" y="225.4" font-size="6.7" fill="#fff" stroke="#222" stroke-width="0.2" paint-order="stroke">0x74</text>
<text x="251.6" y="225.4" font-size="6.7" fill="#fff" stroke="#222" stroke-width="0.2" paint-order="stroke">0x00</text>
<text x="263.6" y="225.4" font-size="6.7" fill="#fff" stroke="#222" stroke-width="0.2" paint-order="stroke">0x2b</text>
<text x="275.6" y="225.4" font-size="6.7" fill="#fff" stroke="#222" stroke-width="0.2" paint-order="stroke">0x00</text>
<text x="287.6" y="225.4" font-size="6.7" fill="#fff" stroke="#222" stroke-width="0.2" paint-order="stroke">0x00</text>
<text x="299.6" y="225.4" font-size="6.7" fill="#fff" stroke="#222" stroke-width="0.2" paint-order="stroke">0x00</text>
<text x="311.6" y="225.4" font-size="6.7" fill="#fff" stroke="#222" stroke-width="0.2" paint-order="stroke">0x00</text>
<text x="323.6" y="225.4" font-size="6.7" fill="#fff" stroke="#222" stroke-width="0.2" paint-order="stroke">0xe6</text>
<text x="335.6" y="225.4" font-size="6.7" fill="#fff" stroke="#222" stroke-width="0.2" paint-order="stroke">0x60</text>
<text x="347.6" y="225.4" font-size="6.7" fill="#fff" stroke="#222" stroke-width="0.2" paint-order="stroke">0xe0</text>
<text x="359.6" y="225.4" font-size="6.7" fill="#fff" stroke="#222" stroke-width="0.2" paint-order="stroke">0xc0</text>
</g>
<path d="M39.6 306.4 L40.6 308.4 H38.6 Z" fill="#e6e600"/>
<path d="M530.50 23 V305.5" stroke="#363636" stroke-width="1" stroke-dasharray="1.4 1.3"/><path d="M570.50 23 V305.5" stroke="#363636" stroke-width="1" stroke-dasharray="1.4 1.3"/><path d="M610.50 23 V305.5" stroke="#363636" stroke-width="1" stroke-dasharray="1.4 1.3"/><path d="M650.50 23 V305.5" stroke="#363636" stroke-width="1" stroke-dasharray="1.4 1.3"/><path d="M690.50 23 V305.5" stroke="#363636" stroke-width="1" stroke-dasharray="1.4 1.3"/><path d="M730.50 23 V305.5" stroke="#363636" stroke-width="1" stroke-dasharray="1.4 1.3"/><path d="M770.50 23 V305.5" stroke="#363636" stroke-width="1" stroke-dasharray="1.4 1.3"/><path d="M810.50 23 V305.5" stroke="#363636" stroke-width="1" stroke-dasharray="1.4 1.3"/><path d="M850.50 23 V305.5" stroke="#363636" stroke-width="1" stroke-dasharray="1.4 1.3"/><path d="M490.5 58.31 H890.5" stroke="#363636" stroke-width="1" stroke-dasharray="1.4 1.3"/><path d="M490.5 93.62 H890.5" stroke="#363636" stroke-width="1" stroke-dasharray="1.4 1.3"/><path d="M490.5 128.94 H890.5" stroke="#363636" stroke-width="1" stroke-dasharray="1.4 1.3"/><path d="M490.5 164.25 H890.5" stroke="#363636" stroke-width="1" stroke-dasharray="1.4 1.3"/><path d="M490.5 199.56 H890.5" stroke="#363636" stroke-width="1" stroke-dasharray="1.4 1.3"/><path d="M490.5 234.88 H890.5" stroke="#363636" stroke-width="1" stroke-dasharray="1.4 1.3"/><path d="M490.5 270.19 H890.5" stroke="#363636" stroke-width="1" stroke-dasharray="1.4 1.3"/><path d="M490.5 164.25 H890.5" stroke="#6a6a6a" stroke-width="1.6" stroke-dasharray="0.9 7.10" stroke-dashoffset="0.45"/><path d="M690.50 23 V305.5" stroke="#6a6a6a" stroke-width="1.6" stroke-dasharray="0.9 6.16" stroke-dashoffset="0.45"/><path d="M498.50 75.97 H889.5" stroke="#3c3c3c" stroke-width="0.9" stroke-dasharray="0.9 7.10" stroke-dashoffset="0.45"/><path d="M498.50 252.53 H889.5" stroke="#3c3c3c" stroke-width="0.9" stroke-dasharray="0.9 7.10" stroke-dashoffset="0.45"/><rect x="490.5" y="23" width="400" height="282.5" fill="none" stroke="#505050" stroke-width="1"/>
<g clip-path="url(#c3)">
<path d="M490.5 93.94999999999999 H543 M490.5 239.4 H550 M592 93.94999999999999 H663 M599 239.4 H670 M712 93.94999999999999 H783 M718 239.4 H790 M832 93.94999999999999 H890.5 M838 239.4 H890.5" fill="none" stroke="#6612dc" stroke-width="5" opacity="0.9" filter="url(#bl)"/>
<path d="M661 93.14999999999999 H722 M661 238.0 H728" fill="none" stroke="#7a20e8" stroke-width="4.5" filter="url(#sp)"/>
<path d="M490.5 92.8 L541.0 92.8 L542.5 92.9 L544.1 93.5 L545.6 94.8 L547.1 96.4 L548.7 98.3 L550.2 100.3 L551.7 103.0 L553.3 106.4 L554.8 110.2 L556.3 114.4 L557.9 119.4 L559.4 125.0 L561.0 130.7 L562.5 136.1 L564.0 141.5 L565.6 146.8 L567.1 152.2 L568.6 157.5 L570.2 162.7 L571.7 168.0 L573.2 173.4 L574.8 178.8 L576.3 184.3 L577.8 189.6 L579.4 194.8 L580.9 199.8 L582.4 204.5 L584.0 209.2 L585.5 213.7 L587.0 217.9 L588.6 221.7 L590.1 225.0 L591.7 228.1 L593.2 230.8 L594.7 232.9 L596.3 234.5 L597.8 235.8 L599.3 236.9 L600.9 237.5 L602.4 237.8 L603.9 238.1 L605.5 238.2 L607.0 238.3 L661.6 238.3 L663.1 238.3 L664.7 238.2 L666.2 238.1 L667.7 238.0 L669.3 237.7 L670.8 236.3 L672.3 233.9 L673.9 231.0 L675.4 227.8 L676.9 223.3 L678.5 218.1 L680.0 212.9 L681.6 207.4 L683.1 201.7 L684.6 195.7 L686.2 189.5 L687.7 183.0 L689.2 176.2 L690.8 169.3 L692.3 162.4 L693.8 155.4 L695.4 148.2 L696.9 141.1 L698.4 134.1 L700.0 126.8 L701.5 119.9 L703.0 113.7 L704.6 107.9 L706.1 103.1 L707.6 99.7 L709.2 97.0 L710.7 95.3 L712.3 94.2 L713.8 93.3 L715.3 92.9 L716.9 92.8 L718.4 92.8 L719.9 92.8 L721.5 92.8 L723.0 92.8 L724.5 92.8 L726.1 92.8 L727.6 92.8 L780.5 92.8 L782.0 92.9 L783.5 93.5 L785.1 94.8 L786.6 96.4 L788.1 98.3 L789.7 100.3 L791.2 103.0 L792.7 106.4 L794.3 110.2 L795.8 114.4 L797.3 119.4 L798.9 125.0 L800.4 130.7 L801.9 136.1 L803.5 141.5 L805.0 146.8 L806.5 152.2 L808.1 157.5 L809.6 162.7 L811.1 168.0 L812.7 173.4 L814.2 178.8 L815.8 184.3 L817.3 189.6 L818.8 194.8 L820.4 199.8 L821.9 204.5 L823.4 209.2 L825.0 213.7 L826.5 217.9 L828.0 221.7 L829.6 225.0 L831.1 228.1 L832.6 230.8 L834.2 232.9 L835.7 234.5 L837.2 235.8 L838.8 236.9 L840.3 237.5 L841.8 237.8 L843.4 238.1 L844.9 238.2 L846.5 238.3 L890.5 238.3 M490.5 238.3 L540.2 238.3 L541.7 238.3 L543.3 238.2 L544.8 238.1 L546.3 238.0 L547.9 237.7 L549.4 236.3 L550.9 233.9 L552.5 231.0 L554.0 227.8 L555.5 223.3 L557.1 218.1 L558.6 212.9 L560.2 207.4 L561.7 201.7 L563.2 195.7 L564.8 189.5 L566.3 183.0 L567.8 176.2 L569.4 169.3 L570.9 162.4 L572.4 155.4 L574.0 148.2 L575.5 141.1 L577.0 134.1 L578.6 126.8 L580.1 119.9 L581.6 113.7 L583.2 107.9 L584.7 103.1 L586.2 99.7 L587.8 97.0 L589.3 95.3 L590.9 94.2 L592.4 93.3 L593.9 92.9 L595.5 92.8 L597.0 92.8 L598.5 92.8 L600.1 92.8 L601.6 92.8 L603.1 92.8 L604.7 92.8 L606.2 92.8 L660.2 92.8 L661.7 92.9 L663.3 93.5 L664.8 94.8 L666.3 96.4 L667.9 98.3 L669.4 100.3 L670.9 103.0 L672.5 106.4 L674.0 110.2 L675.5 114.4 L677.1 119.4 L678.6 125.0 L680.2 130.7 L681.7 136.1 L683.2 141.5 L684.8 146.8 L686.3 152.2 L687.8 157.5 L689.4 162.7 L690.9 168.0 L692.4 173.4 L694.0 178.8 L695.5 184.3 L697.0 189.6 L698.6 194.8 L700.1 199.8 L701.6 204.5 L703.2 209.2 L704.7 213.7 L706.2 217.9 L707.8 221.7 L709.3 225.0 L710.9 228.1 L712.4 230.8 L713.9 232.9 L715.5 234.5 L717.0 235.8 L718.5 236.9 L720.1 237.5 L721.6 237.8 L723.1 238.1 L724.7 238.2 L726.2 238.3 L780.8 238.3 L782.3 238.3 L783.8 238.2 L785.4 238.1 L786.9 238.0 L788.4 237.7 L790.0 236.3 L791.5 233.9 L793.0 231.0 L794.6 227.8 L796.1 223.3 L797.6 218.1 L799.2 212.9 L800.7 207.4 L802.2 201.7 L803.8 195.7 L805.3 189.5 L806.8 183.0 L808.4 176.2 L809.9 169.3 L811.4 162.4 L813.0 155.4 L814.5 148.2 L816.1 141.1 L817.6 134.1 L819.1 126.8 L820.7 119.9 L822.2 113.7 L823.7 107.9 L825.3 103.1 L826.8 99.7 L828.3 97.0 L829.9 95.3 L831.4 94.2 L832.9 93.3 L834.5 92.9 L836.0 92.8 L837.5 92.8 L839.1 92.8 L840.6 92.8 L842.1 92.8 L843.7 92.8 L845.2 92.8 L846.8 92.8 L890.5 92.8" fill="none" stroke="#5a14c8" stroke-width="2.1" opacity="0.8" filter="url(#bl)"/>
<path d="M606.0 238.3 L660.6 238.3 L662.1 238.3 L663.7 238.2 L665.2 238.1 L666.7 238.0 L668.3 237.7 L669.8 236.3 L671.3 233.9 L672.9 231.0 L674.4 227.8 L675.9 223.3 L677.5 218.1 L679.0 212.9 L680.6 207.4 L682.1 201.7 L683.6 195.7 L685.2 189.5 L686.7 183.0 L688.2 176.2 L689.8 169.3 L691.3 162.4 L692.8 155.4 L694.4 148.2 L695.9 141.1 L697.4 134.1 L699.0 126.8 L700.5 119.9 L702.0 113.7 L703.6 107.9 L705.1 103.1 L706.6 99.7 L708.2 97.0 L709.7 95.3 L711.3 94.2 L712.8 93.3 L714.3 92.9 L715.9 92.8 L717.4 92.8 L718.9 92.8 L720.5 92.8 L722.0 92.8 L723.5 92.8 L725.1 92.8 L726.6 92.8 L779.5 92.8 L781.0 92.9 L782.5 93.5 L784.1 94.8 L785.6 96.4 L787.1 98.3 L788.7 100.3 L790.2 103.0 L791.7 106.4 L793.3 110.2 L794.8 114.4 L796.3 119.4 L797.9 125.0 L799.4 130.7 L800.9 136.1 L802.5 141.5 L804.0 146.8 L805.5 152.2 L807.1 157.5 L808.6 162.7 L810.1 168.0 L811.7 173.4 L813.2 178.8 L814.8 184.3 L816.3 189.6 L817.8 194.8 L819.4 199.8 L820.9 204.5 L822.4 209.2 L824.0 213.7 L825.5 217.9 L827.0 221.7 L828.6 225.0 L830.1 228.1 L831.6 230.8 L833.2 232.9 L834.7 234.5 L836.2 235.8 L837.8 236.9 L839.3 237.5 L840.8 237.8 L842.4 238.1 L843.9 238.2 L845.5 238.3 L890.5 238.3 M606.0 92.8 L659.2 92.8 L660.7 92.9 L662.3 93.5 L663.8 94.8 L665.3 96.4 L666.9 98.3 L668.4 100.3 L669.9 103.0 L671.5 106.4 L673.0 110.2 L674.5 114.4 L676.1 119.4 L677.6 125.0 L679.2 130.7 L680.7 136.1 L682.2 141.5 L683.8 146.8 L685.3 152.2 L686.8 157.5 L688.4 162.7 L689.9 168.0 L691.4 173.4 L693.0 178.8 L694.5 184.3 L696.0 189.6 L697.6 194.8 L699.1 199.8 L700.6 204.5 L702.2 209.2 L703.7 213.7 L705.2 217.9 L706.8 221.7 L708.3 225.0 L709.9 228.1 L711.4 230.8 L712.9 232.9 L714.5 234.5 L716.0 235.8 L717.5 236.9 L719.1 237.5 L720.6 237.8 L722.1 238.1 L723.7 238.2 L725.2 238.3 L779.8 238.3 L781.3 238.3 L782.8 238.2 L784.4 238.1 L785.9 238.0 L787.4 237.7 L789.0 236.3 L790.5 233.9 L792.0 231.0 L793.6 227.8 L795.1 223.3 L796.6 218.1 L798.2 212.9 L799.7 207.4 L801.2 201.7 L802.8 195.7 L804.3 189.5 L805.8 183.0 L807.4 176.2 L808.9 169.3 L810.4 162.4 L812.0 155.4 L813.5 148.2 L815.1 141.1 L816.6 134.1 L818.1 126.8 L819.7 119.9 L821.2 113.7 L822.7 107.9 L824.3 103.1 L825.8 99.7 L827.3 97.0 L828.9 95.3 L830.4 94.2 L831.9 93.3 L833.5 92.9 L835.0 92.8 L836.5 92.8 L838.1 92.8 L839.6 92.8 L841.1 92.8 L842.7 92.8 L844.2 92.8 L845.8 92.8 L890.5 92.8" fill="none" stroke="#6418d0" stroke-width="1.1" opacity="0.4" filter="url(#bl)"/>
<path d="M606.0 238.3 L662.8 238.3 L664.3 238.3 L665.9 238.2 L667.4 238.1 L668.9 238.0 L670.5 237.7 L672.0 236.3 L673.5 233.9 L675.1 231.0 L676.6 227.8 L678.1 223.3 L679.7 218.1 L681.2 212.9 L682.8 207.4 L684.3 201.7 L685.8 195.7 L687.4 189.5 L688.9 183.0 L690.4 176.2 L692.0 169.3 L693.5 162.4 L695.0 155.4 L696.6 148.2 L698.1 141.1 L699.6 134.1 L701.2 126.8 L702.7 119.9 L704.2 113.7 L705.8 107.9 L707.3 103.1 L708.8 99.7 L710.4 97.0 L711.9 95.3 L713.5 94.2 L715.0 93.3 L716.5 92.9 L718.1 92.8 L719.6 92.8 L721.1 92.8 L722.7 92.8 L724.2 92.8 L725.7 92.8 L727.3 92.8 L728.8 92.8 L781.7 92.8 L783.2 92.9 L784.7 93.5 L786.3 94.8 L787.8 96.4 L789.3 98.3 L790.9 100.3 L792.4 103.0 L793.9 106.4 L795.5 110.2 L797.0 114.4 L798.5 119.4 L800.1 125.0 L801.6 130.7 L803.1 136.1 L804.7 141.5 L806.2 146.8 L807.7 152.2 L809.3 157.5 L810.8 162.7 L812.3 168.0 L813.9 173.4 L815.4 178.8 L817.0 184.3 L818.5 189.6 L820.0 194.8 L821.6 199.8 L823.1 204.5 L824.6 209.2 L826.2 213.7 L827.7 217.9 L829.2 221.7 L830.8 225.0 L832.3 228.1 L833.8 230.8 L835.4 232.9 L836.9 234.5 L838.4 235.8 L840.0 236.9 L841.5 237.5 L843.0 237.8 L844.6 238.1 L846.1 238.2 L847.7 238.3 L890.5 238.3 M606.0 92.8 L661.4 92.8 L662.9 92.9 L664.5 93.5 L666.0 94.8 L667.5 96.4 L669.1 98.3 L670.6 100.3 L672.1 103.0 L673.7 106.4 L675.2 110.2 L676.7 114.4 L678.3 119.4 L679.8 125.0 L681.4 130.7 L682.9 136.1 L684.4 141.5 L686.0 146.8 L687.5 152.2 L689.0 157.5 L690.6 162.7 L692.1 168.0 L693.6 173.4 L695.2 178.8 L696.7 184.3 L698.2 189.6 L699.8 194.8 L701.3 199.8 L702.8 204.5 L704.4 209.2 L705.9 213.7 L707.4 217.9 L709.0 221.7 L710.5 225.0 L712.1 228.1 L713.6 230.8 L715.1 232.9 L716.7 234.5 L718.2 235.8 L719.7 236.9 L721.3 237.5 L722.8 237.8 L724.3 238.1 L725.9 238.2 L727.4 238.3 L782.0 238.3 L783.5 238.3 L785.0 238.2 L786.6 238.1 L788.1 238.0 L789.6 237.7 L791.2 236.3 L792.7 233.9 L794.2 231.0 L795.8 227.8 L797.3 223.3 L798.8 218.1 L800.4 212.9 L801.9 207.4 L803.4 201.7 L805.0 195.7 L806.5 189.5 L808.0 183.0 L809.6 176.2 L811.1 169.3 L812.6 162.4 L814.2 155.4 L815.7 148.2 L817.3 141.1 L818.8 134.1 L820.3 126.8 L821.9 119.9 L823.4 113.7 L824.9 107.9 L826.5 103.1 L828.0 99.7 L829.5 97.0 L831.1 95.3 L832.6 94.2 L834.1 93.3 L835.7 92.9 L837.2 92.8 L838.7 92.8 L840.3 92.8 L841.8 92.8 L843.3 92.8 L844.9 92.8 L846.4 92.8 L848.0 92.8 L890.5 92.8" fill="none" stroke="#6418d0" stroke-width="1.1" opacity="0.4" filter="url(#bl)"/>
<path d="M640.0 238.3 L662.1 238.3 L663.6 238.3 L665.2 238.2 L666.7 238.1 L668.2 238.0 L669.8 237.7 L671.3 236.3 L672.8 233.9 L674.4 231.0 L675.9 227.8 L677.4 223.3 L679.0 218.1 L680.5 212.9 L682.1 207.4 L683.6 201.7 L685.1 195.7 L686.7 189.5 L688.2 183.0 L689.7 176.2 L691.3 169.3 L692.8 162.4 L694.3 155.4 L695.9 148.2 L697.4 141.1 L698.9 134.1 L700.5 126.8 L702.0 119.9 L703.5 113.7 L705.1 107.9 L706.6 103.1 L708.1 99.7 L709.7 97.0 L711.2 95.3 L712.8 94.2 L714.3 93.3 L715.8 92.9 L717.4 92.8 L718.9 92.8 L720.4 92.8 L722.0 92.8 L723.5 92.8 L725.0 92.8 L726.6 92.8 L728.1 92.8 L781.0 92.8 L782.5 92.9 L784.0 93.5 L785.6 94.8 L787.1 96.4 L788.6 98.3 L790.2 100.3 L791.7 103.0 L793.2 106.4 L794.8 110.2 L796.3 114.4 L797.8 119.4 L799.4 125.0 L800.9 130.7 L802.4 136.1 L804.0 141.5 L805.5 146.8 L807.0 152.2 L808.6 157.5 L810.1 162.7 L811.6 168.0 L813.2 173.4 L814.7 178.8 L816.3 184.3 L817.8 189.6 L819.3 194.8 L820.9 199.8 L822.4 204.5 L823.9 209.2 L825.5 213.7 L827.0 217.9 L828.5 221.7 L830.1 225.0 L831.6 228.1 L833.1 230.8 L834.7 232.9 L836.2 234.5 L837.7 235.8 L839.3 236.9 L840.8 237.5 L842.3 237.8 L843.9 238.1 L845.4 238.2 L847.0 238.3 L890.5 238.3 M640.0 92.8 L660.7 92.8 L662.2 92.9 L663.8 93.5 L665.3 94.8 L666.8 96.4 L668.4 98.3 L669.9 100.3 L671.4 103.0 L673.0 106.4 L674.5 110.2 L676.0 114.4 L677.6 119.4 L679.1 125.0 L680.7 130.7 L682.2 136.1 L683.7 141.5 L685.3 146.8 L686.8 152.2 L688.3 157.5 L689.9 162.7 L691.4 168.0 L692.9 173.4 L694.5 178.8 L696.0 184.3 L697.5 189.6 L699.1 194.8 L700.6 199.8 L702.1 204.5 L703.7 209.2 L705.2 213.7 L706.7 217.9 L708.3 221.7 L709.8 225.0 L711.4 228.1 L712.9 230.8 L714.4 232.9 L716.0 234.5 L717.5 235.8 L719.0 236.9 L720.6 237.5 L722.1 237.8 L723.6 238.1 L725.2 238.2 L726.7 238.3 L781.2 238.3 L782.8 238.3 L784.3 238.2 L785.9 238.1 L787.4 238.0 L788.9 237.7 L790.5 236.3 L792.0 233.9 L793.5 231.0 L795.1 227.8 L796.6 223.3 L798.1 218.1 L799.7 212.9 L801.2 207.4 L802.7 201.7 L804.3 195.7 L805.8 189.5 L807.3 183.0 L808.9 176.2 L810.4 169.3 L811.9 162.4 L813.5 155.4 L815.0 148.2 L816.6 141.1 L818.1 134.1 L819.6 126.8 L821.2 119.9 L822.7 113.7 L824.2 107.9 L825.8 103.1 L827.3 99.7 L828.8 97.0 L830.4 95.3 L831.9 94.2 L833.4 93.3 L835.0 92.9 L836.5 92.8 L838.0 92.8 L839.6 92.8 L841.1 92.8 L842.6 92.8 L844.2 92.8 L845.7 92.8 L847.2 92.8 L890.5 92.8" fill="none" stroke="#7a1cf0" stroke-width="4.6" filter="url(#sp)"/>
<path d="M490.5 93.94999999999999 H543 M490.5 239.4 H550 M592 93.94999999999999 H663 M599 239.4 H670 M712 93.94999999999999 H783 M718 239.4 H790 M832 93.94999999999999 H890.5 M838 239.4 H890.5" fill="none" stroke="#7a1cf0" stroke-width="7" filter="url(#sp)"/>
<rect x="529.5" y="54.5" width="322.5" height="33" fill="#fff"/>
<rect x="529.5" y="251" width="322.5" height="33.5" fill="#fff"/>
<polygon points="572.5,166.5 586.7,139.0 606.2,115.6 630.0,108.0 654.6,108.0 672.6,134.7 686.3,164.0 688.0,167.0 687.6,168.7 674.1,200.3 654.4,232.4 629.8,232.4 606.1,223.3 587.1,200.3" fill="#fff"/>
<polygon points="692.9,166.5 707.1,139.0 726.6,115.6 750.4,108.0 775.0,108.0 793.0,134.7 806.7,164.0 808.4,167.0 808.0,168.7 794.5,200.3 774.8,232.4 750.2,232.4 726.5,223.3 707.5,200.3" fill="#fff"/>
<linearGradient id="eg" gradientUnits="userSpaceOnUse" x1="490" y1="0" x2="890" y2="0"><stop offset="0" stop-color="#2c38f4"/><stop offset="0.45" stop-color="#2c34f0"/><stop offset="0.56" stop-color="#5222dc"/><stop offset="1" stop-color="#5a1ed6"/></linearGradient>
<path d="M490.5 92.8 L541.0 92.8 L542.5 92.9 L544.1 93.5 L545.6 94.8 L547.1 96.4 L548.7 98.3 L550.2 100.3 L551.7 103.0 L553.3 106.4 L554.8 110.2 L556.3 114.4 L557.9 119.4 L559.4 125.0 L561.0 130.7 L562.5 136.1 L564.0 141.5 L565.6 146.8 L567.1 152.2 L568.6 157.5 L570.2 162.7 L571.7 168.0 L573.2 173.4 L574.8 178.8 L576.3 184.3 L577.8 189.6 L579.4 194.8 L580.9 199.8 L582.4 204.5 L584.0 209.2 L585.5 213.7 L587.0 217.9 L588.6 221.7 L590.1 225.0 L591.7 228.1 L593.2 230.8 L594.7 232.9 L596.3 234.5 L597.8 235.8 L599.3 236.9 L600.9 237.5 L602.4 237.8 L603.9 238.1 L605.5 238.2 L607.0 238.3 L661.6 238.3 L663.1 238.3 L664.7 238.2 L666.2 238.1 L667.7 238.0 L669.3 237.7 L670.8 236.3 L672.3 233.9 L673.9 231.0 L675.4 227.8 L676.9 223.3 L678.5 218.1 L680.0 212.9 L681.6 207.4 L683.1 201.7 L684.6 195.7 L686.2 189.5 L687.7 183.0 L689.2 176.2 L690.8 169.3 L692.3 162.4 L693.8 155.4 L695.4 148.2 L696.9 141.1 L698.4 134.1 L700.0 126.8 L701.5 119.9 L703.0 113.7 L704.6 107.9 L706.1 103.1 L707.6 99.7 L709.2 97.0 L710.7 95.3 L712.3 94.2 L713.8 93.3 L715.3 92.9 L716.9 92.8 L718.4 92.8 L719.9 92.8 L721.5 92.8 L723.0 92.8 L724.5 92.8 L726.1 92.8 L727.6 92.8 L780.5 92.8 L782.0 92.9 L783.5 93.5 L785.1 94.8 L786.6 96.4 L788.1 98.3 L789.7 100.3 L791.2 103.0 L792.7 106.4 L794.3 110.2 L795.8 114.4 L797.3 119.4 L798.9 125.0 L800.4 130.7 L801.9 136.1 L803.5 141.5 L805.0 146.8 L806.5 152.2 L808.1 157.5 L809.6 162.7 L811.1 168.0 L812.7 173.4 L814.2 178.8 L815.8 184.3 L817.3 189.6 L818.8 194.8 L820.4 199.8 L821.9 204.5 L823.4 209.2 L825.0 213.7 L826.5 217.9 L828.0 221.7 L829.6 225.0 L831.1 228.1 L832.6 230.8 L834.2 232.9 L835.7 234.5 L837.2 235.8 L838.8 236.9 L840.3 237.5 L841.8 237.8 L843.4 238.1 L844.9 238.2 L846.5 238.3 L890.5 238.3 M490.5 238.3 L540.2 238.3 L541.7 238.3 L543.3 238.2 L544.8 238.1 L546.3 238.0 L547.9 237.7 L549.4 236.3 L550.9 233.9 L552.5 231.0 L554.0 227.8 L555.5 223.3 L557.1 218.1 L558.6 212.9 L560.2 207.4 L561.7 201.7 L563.2 195.7 L564.8 189.5 L566.3 183.0 L567.8 176.2 L569.4 169.3 L570.9 162.4 L572.4 155.4 L574.0 148.2 L575.5 141.1 L577.0 134.1 L578.6 126.8 L580.1 119.9 L581.6 113.7 L583.2 107.9 L584.7 103.1 L586.2 99.7 L587.8 97.0 L589.3 95.3 L590.9 94.2 L592.4 93.3 L593.9 92.9 L595.5 92.8 L597.0 92.8 L598.5 92.8 L600.1 92.8 L601.6 92.8 L603.1 92.8 L604.7 92.8 L606.2 92.8 L660.2 92.8 L661.7 92.9 L663.3 93.5 L664.8 94.8 L666.3 96.4 L667.9 98.3 L669.4 100.3 L670.9 103.0 L672.5 106.4 L674.0 110.2 L675.5 114.4 L677.1 119.4 L678.6 125.0 L680.2 130.7 L681.7 136.1 L683.2 141.5 L684.8 146.8 L686.3 152.2 L687.8 157.5 L689.4 162.7 L690.9 168.0 L692.4 173.4 L694.0 178.8 L695.5 184.3 L697.0 189.6 L698.6 194.8 L700.1 199.8 L701.6 204.5 L703.2 209.2 L704.7 213.7 L706.2 217.9 L707.8 221.7 L709.3 225.0 L710.9 228.1 L712.4 230.8 L713.9 232.9 L715.5 234.5 L717.0 235.8 L718.5 236.9 L720.1 237.5 L721.6 237.8 L723.1 238.1 L724.7 238.2 L726.2 238.3 L780.8 238.3 L782.3 238.3 L783.8 238.2 L785.4 238.1 L786.9 238.0 L788.4 237.7 L790.0 236.3 L791.5 233.9 L793.0 231.0 L794.6 227.8 L796.1 223.3 L797.6 218.1 L799.2 212.9 L800.7 207.4 L802.2 201.7 L803.8 195.7 L805.3 189.5 L806.8 183.0 L808.4 176.2 L809.9 169.3 L811.4 162.4 L813.0 155.4 L814.5 148.2 L816.1 141.1 L817.6 134.1 L819.1 126.8 L820.7 119.9 L822.2 113.7 L823.7 107.9 L825.3 103.1 L826.8 99.7 L828.3 97.0 L829.9 95.3 L831.4 94.2 L832.9 93.3 L834.5 92.9 L836.0 92.8 L837.5 92.8 L839.1 92.8 L840.6 92.8 L842.1 92.8 L843.7 92.8 L845.2 92.8 L846.8 92.8 L890.5 92.8" fill="none" stroke="url(#eg)" stroke-width="1.05"/>
<path d="M490.5 92.8 L541.0 92.8 L542.5 92.9 L544.1 93.5 L545.6 94.8 L547.1 96.4 L548.7 98.3 L550.2 100.3 L551.7 103.0 L553.3 106.4 L554.8 110.2 L556.3 114.4 L557.9 119.4 L559.4 125.0 L561.0 130.7 L562.5 136.1 L564.0 141.5 L565.6 146.8 L567.1 152.2 L568.6 157.5 L570.2 162.7 L571.7 168.0 L573.2 173.4 L574.8 178.8 L576.3 184.3 L577.8 189.6 L579.4 194.8 L580.9 199.8 L582.4 204.5 L584.0 209.2 L585.5 213.7 L587.0 217.9 L588.6 221.7 L590.1 225.0 L591.7 228.1 L593.2 230.8 L594.7 232.9 L596.3 234.5 L597.8 235.8 L599.3 236.9 L600.9 237.5 L602.4 237.8 L603.9 238.1 L605.5 238.2 L607.0 238.3 L661.6 238.3 L663.1 238.3 L664.7 238.2 L666.2 238.1 L667.7 238.0 L669.3 237.7 L670.8 236.3 L672.3 233.9 L673.9 231.0 L675.4 227.8 L676.9 223.3 L678.5 218.1 L680.0 212.9 L681.6 207.4 L683.1 201.7 L684.6 195.7 L686.2 189.5 L687.7 183.0 L689.2 176.2 L690.8 169.3 L692.3 162.4 L693.8 155.4 L695.4 148.2 L696.9 141.1 L698.4 134.1 L700.0 126.8 L701.5 119.9 L703.0 113.7 L704.6 107.9 L706.1 103.1 L707.6 99.7 L709.2 97.0 L710.7 95.3 L712.3 94.2 L713.8 93.3 L715.3 92.9 L716.9 92.8 L718.4 92.8 L719.9 92.8 L721.5 92.8 L723.0 92.8 L724.5 92.8 L726.1 92.8 L727.6 92.8 L780.5 92.8 L782.0 92.9 L783.5 93.5 L785.1 94.8 L786.6 96.4 L788.1 98.3 L789.7 100.3 L791.2 103.0 L792.7 106.4 L794.3 110.2 L795.8 114.4 L797.3 119.4 L798.9 125.0 L800.4 130.7 L801.9 136.1 L803.5 141.5 L805.0 146.8 L806.5 152.2 L808.1 157.5 L809.6 162.7 L811.1 168.0 L812.7 173.4 L814.2 178.8 L815.8 184.3 L817.3 189.6 L818.8 194.8 L820.4 199.8 L821.9 204.5 L823.4 209.2 L825.0 213.7 L826.5 217.9 L828.0 221.7 L829.6 225.0 L831.1 228.1 L832.6 230.8 L834.2 232.9 L835.7 234.5 L837.2 235.8 L838.8 236.9 L840.3 237.5 L841.8 237.8 L843.4 238.1 L844.9 238.2 L846.5 238.3 L890.5 238.3 M490.5 238.3 L540.2 238.3 L541.7 238.3 L543.3 238.2 L544.8 238.1 L546.3 238.0 L547.9 237.7 L549.4 236.3 L550.9 233.9 L552.5 231.0 L554.0 227.8 L555.5 223.3 L557.1 218.1 L558.6 212.9 L560.2 207.4 L561.7 201.7 L563.2 195.7 L564.8 189.5 L566.3 183.0 L567.8 176.2 L569.4 169.3 L570.9 162.4 L572.4 155.4 L574.0 148.2 L575.5 141.1 L577.0 134.1 L578.6 126.8 L580.1 119.9 L581.6 113.7 L583.2 107.9 L584.7 103.1 L586.2 99.7 L587.8 97.0 L589.3 95.3 L590.9 94.2 L592.4 93.3 L593.9 92.9 L595.5 92.8 L597.0 92.8 L598.5 92.8 L600.1 92.8 L601.6 92.8 L603.1 92.8 L604.7 92.8 L606.2 92.8 L660.2 92.8 L661.7 92.9 L663.3 93.5 L664.8 94.8 L666.3 96.4 L667.9 98.3 L669.4 100.3 L670.9 103.0 L672.5 106.4 L674.0 110.2 L675.5 114.4 L677.1 119.4 L678.6 125.0 L680.2 130.7 L681.7 136.1 L683.2 141.5 L684.8 146.8 L686.3 152.2 L687.8 157.5 L689.4 162.7 L690.9 168.0 L692.4 173.4 L694.0 178.8 L695.5 184.3 L697.0 189.6 L698.6 194.8 L700.1 199.8 L701.6 204.5 L703.2 209.2 L704.7 213.7 L706.2 217.9 L707.8 221.7 L709.3 225.0 L710.9 228.1 L712.4 230.8 L713.9 232.9 L715.5 234.5 L717.0 235.8 L718.5 236.9 L720.1 237.5 L721.6 237.8 L723.1 238.1 L724.7 238.2 L726.2 238.3 L780.8 238.3 L782.3 238.3 L783.8 238.2 L785.4 238.1 L786.9 238.0 L788.4 237.7 L790.0 236.3 L791.5 233.9 L793.0 231.0 L794.6 227.8 L796.1 223.3 L797.6 218.1 L799.2 212.9 L800.7 207.4 L802.2 201.7 L803.8 195.7 L805.3 189.5 L806.8 183.0 L808.4 176.2 L809.9 169.3 L811.4 162.4 L813.0 155.4 L814.5 148.2 L816.1 141.1 L817.6 134.1 L819.1 126.8 L820.7 119.9 L822.2 113.7 L823.7 107.9 L825.3 103.1 L826.8 99.7 L828.3 97.0 L829.9 95.3 L831.4 94.2 L832.9 93.3 L834.5 92.9 L836.0 92.8 L837.5 92.8 L839.1 92.8 L840.6 92.8 L842.1 92.8 L843.7 92.8 L845.2 92.8 L846.8 92.8 L890.5 92.8" fill="none" stroke="#20a8e8" stroke-width="0.55" opacity="0.7"/>
<path d="M490.5 92.85 H541 M490.5 238.3 H548 M594 92.85 H662 M599 238.3 H669 M714 92.85 H782 M719 238.3 H789 M834 92.85 H890.5 M839 238.3 H890.5" fill="none" stroke="#26a4ea" stroke-width="1.5"/>
<path d="M490.5 92.85 H541 M490.5 238.3 H548 M594 92.85 H662 M599 238.3 H669 M714 92.85 H782 M719 238.3 H789 M834 92.85 H890.5 M839 238.3 H890.5" fill="none" stroke="#3cf0b0" stroke-width="0.85" opacity="0.95"/>
</g>
<path d="M570.5 307 L572 310 H569 Z" fill="#e6e600"/>
<rect x="450.8" y="234" width="39.2" height="6.9" fill="#e6e600"/>
</svg>
<div class="yl r" style="left:-21px;width:60px;top:22.0px;">3.185 V</div>
<div class="yl r" style="left:-21px;width:60px;top:51.7px;">2.185 V</div>
<div class="yl r" style="left:-21px;width:60px;top:84.3px;">1.185 V</div>
<div class="yl r" style="left:-21px;width:60px;top:116.9px;">185 mV</div>
<div class="yl r" style="left:-21px;width:60px;top:145.4px;">-815 mV</div>
<div class="yl" style="left:41.5px;top:154.8px;">-50 ms</div>
<div class="yl" style="left:81.5px;width:80px;text-align:center;top:154.8px">-30 ms</div>
<div class="yl" style="left:161.5px;width:80px;text-align:center;top:154.8px">-10 ms</div>
<div class="yl" style="left:241.5px;width:80px;text-align:center;top:154.8px">10 ms</div>
<div class="yl" style="left:321.5px;width:80px;text-align:center;top:154.8px">30 ms</div>
<div class="yl r" style="left:382.3px;width:60px;top:154.8px;">50 ms</div>
<div class="a" style="left:31.8px;top:120.3px;width:9.4px;height:6.7px;background:#eaea00;font-size:5px;line-height:6.7px;color:#222;text-align:center;border-radius:1px">C1</div>
<div class="yl r" style="left:-21px;width:60px;top:173.8px;">3.185 V</div>
<div class="yl r" style="left:-21px;width:60px;top:203.2px;">2.185 V</div>
<div class="yl r" style="left:-21px;width:60px;top:235.8px;">1.185 V</div>
<div class="yl r" style="left:-21px;width:60px;top:269.3px;">185 mV</div>
<div class="yl r" style="left:-21px;width:60px;top:296.5px;">-815 mV</div>
<div class="yl" style="left:41.2px;top:305.7px;">26.899 ms</div>
<div class="yl" style="left:201.8px;width:80px;text-align:center;top:305.7px">27.46 ms</div>
<div class="yl r" style="left:382.3px;width:60px;top:305.7px;">28.021 ms</div>
<div class="a" style="left:32.6px;top:271.8px;width:8.4px;height:6.4px;background:#eaea00;font-size:5px;line-height:6.4px;color:#222;text-align:center;border-radius:1px">Z1</div>
<div class="yl r" style="left:427.5px;width:60px;top:22.5px;">1.7 V</div>
<div class="yl r" style="left:427.5px;width:60px;top:54.0px;">1.425 V</div>
<div class="yl r" style="left:427.5px;width:60px;top:89.0px;">1.15 V</div>
<div class="yl r" style="left:427.5px;width:60px;top:124.5px;">875 mV</div>
<div class="yl r" style="left:427.5px;width:60px;top:160.0px;">600 mV</div>
<div class="yl r" style="left:427.5px;width:60px;top:195.0px;">325 mV</div>
<div class="yl r" style="left:427.5px;width:60px;top:230.5px;">50 mV</div>
<div class="yl r" style="left:427.5px;width:60px;top:266.0px;">-225 mV</div>
<div class="yl r" style="left:427.5px;width:60px;top:297.0px;">-500 mV</div>
<div class="yl" style="left:491px;top:306.5px;">-1.119 µs</div>
<div class="yl" style="left:530.5px;width:80px;text-align:center;top:306.5px">0 ns</div>
<div class="yl" style="left:610.5px;width:80px;text-align:center;top:306.5px">1.119 µs</div>
<div class="yl" style="left:690.5px;width:80px;text-align:center;top:306.5px">2.238 µs</div>
<div class="yl" style="left:770.5px;width:80px;text-align:center;top:306.5px">3.357 µs</div>
<div class="yl r" style="left:831.5px;width:60px;top:306.5px;">4.476 µs</div>
<div class="a" style="left:454.5px;top:234.9px;font-size:5.2px;line-height:5.5px;color:#222">USBPDEyeExe</div>
<div class="m" style="left:2px;top:323.55px;font-weight:bold;">USB-PD</div>
<div class="m" style="left:2px;top:332.90px;">value</div>
<div class="m" style="left:2px;top:342.25px;">mean</div>
<div class="m" style="left:2px;top:351.60px;">min</div>
<div class="m" style="left:2px;top:360.95px;">max</div>
<div class="m" style="left:2px;top:370.30px;">sdev</div>
<div class="m" style="left:2px;top:379.65px;">num</div>
<div class="m" style="left:2px;top:389.00px;">status</div>
<div class="m r" style="left:33.75px;width:70px;top:323.55px;color:#eaeaea">fBitRate</div>
<div class="m r" style="left:33.75px;width:70px;top:332.90px">299.13 kbit/s</div>
<div class="m r" style="left:33.75px;width:70px;top:342.25px">299.13 kbit/s</div>
<div class="m r" style="left:33.75px;width:70px;top:351.60px">299.13 kbit/s</div>
<div class="m r" style="left:33.75px;width:70px;top:360.95px">299.13 kbit/s</div>
<div class="a" style="left:96.75px;top:374.70px;width:6.5px;height:0;border-top:1px dashed #888"></div>
<div class="m r" style="left:33.75px;width:70px;top:379.65px">1</div>
<svg class="a" style="left:97.75px;top:390.50px" width="6" height="6" viewBox="0 0 6 6"><path d="M0.8 3.2 L2.2 4.8 L5.2 1" fill="none" stroke="#20d020" stroke-width="1.2"/></svg>
<div class="m r" style="left:85.5px;width:70px;top:323.55px;color:#eaeaea">tUnitInterval</div>
<div class="m r" style="left:85.5px;width:70px;top:332.90px">3.343027 µs</div>
<div class="m r" style="left:85.5px;width:70px;top:342.25px">3.343027 µs</div>
<div class="m r" style="left:85.5px;width:70px;top:351.60px">3.343027 µs</div>
<div class="m r" style="left:85.5px;width:70px;top:360.95px">3.343027 µs</div>
<div class="a" style="left:148.5px;top:374.70px;width:6.5px;height:0;border-top:1px dashed #888"></div>
<div class="m r" style="left:85.5px;width:70px;top:379.65px">1</div>
<svg class="a" style="left:149.5px;top:390.50px" width="6" height="6" viewBox="0 0 6 6"><path d="M0.8 3.2 L2.2 4.8 L5.2 1" fill="none" stroke="#20d020" stroke-width="1.2"/></svg>
<div class="m r" style="left:137px;width:70px;top:323.55px;color:#eaeaea">pBitRate</div>
<div class="m r" style="left:137px;width:70px;top:332.90px">4.1673811 %</div>
<div class="m r" style="left:137px;width:70px;top:342.25px">4.1673811 %</div>
<div class="m r" style="left:137px;width:70px;top:351.60px">4.1673811 %</div>
<div class="m r" style="left:137px;width:70px;top:360.95px">4.1673811 %</div>
<div class="a" style="left:200px;top:374.70px;width:6.5px;height:0;border-top:1px dashed #888"></div>
<div class="m r" style="left:137px;width:70px;top:379.65px">1</div>
<svg class="a" style="left:201px;top:390.50px" width="6" height="6" viewBox="0 0 6 6"><path d="M0.8 3.2 L2.2 4.8 L5.2 1" fill="none" stroke="#20d020" stroke-width="1.2"/></svg>
<div class="m r" style="left:189px;width:70px;top:323.55px;color:#eaeaea">tFall</div>
<div class="m r" style="left:189px;width:70px;top:332.90px">513.6 ns</div>
<div class="m r" style="left:189px;width:70px;top:342.25px">514.036 ns</div>
<div class="m r" style="left:189px;width:70px;top:351.60px">504.5 ns</div>
<div class="m r" style="left:189px;width:70px;top:360.95px">525.9 ns</div>
<div class="m r" style="left:189px;width:70px;top:370.30px">4.053 ns</div>
<div class="m r" style="left:189px;width:70px;top:379.65px">148</div>
<svg class="a" style="left:253px;top:390.50px" width="6" height="6" viewBox="0 0 6 6"><path d="M0.8 3.2 L2.2 4.8 L5.2 1" fill="none" stroke="#20d020" stroke-width="1.2"/></svg>
<div class="m r" style="left:240.5px;width:70px;top:323.55px;color:#eaeaea">tRise</div>
<div class="m r" style="left:240.5px;width:70px;top:332.90px">473.1 ns</div>
<div class="m r" style="left:240.5px;width:70px;top:342.25px">474.378 ns</div>
<div class="m r" style="left:240.5px;width:70px;top:351.60px">466.8 ns</div>
<div class="m r" style="left:240.5px;width:70px;top:360.95px">486.1 ns</div>
<div class="m r" style="left:240.5px;width:70px;top:370.30px">3.554 ns</div>
<div class="m r" style="left:240.5px;width:70px;top:379.65px">148</div>
<svg class="a" style="left:304.5px;top:390.50px" width="6" height="6" viewBox="0 0 6 6"><path d="M0.8 3.2 L2.2 4.8 L5.2 1" fill="none" stroke="#20d020" stroke-width="1.2"/></svg>
<div class="m r" style="left:291.8px;width:70px;top:323.55px;color:#eaeaea">vHigh</div>
<div class="m r" style="left:291.8px;width:70px;top:332.90px">1.1576 V</div>
<div class="m r" style="left:291.8px;width:70px;top:342.25px">1.1576 V</div>
<div class="m r" style="left:291.8px;width:70px;top:351.60px">1.1576 V</div>
<div class="m r" style="left:291.8px;width:70px;top:360.95px">1.1576 V</div>
<div class="a" style="left:354.8px;top:374.70px;width:6.5px;height:0;border-top:1px dashed #888"></div>
<div class="m r" style="left:291.8px;width:70px;top:379.65px">1</div>
<svg class="a" style="left:355.8px;top:390.50px" width="6" height="6" viewBox="0 0 6 6"><path d="M0.8 3.2 L2.2 4.8 L5.2 1" fill="none" stroke="#20d020" stroke-width="1.2"/></svg>
<div class="m r" style="left:343.2px;width:70px;top:323.55px;color:#eaeaea">vLow</div>
<div class="m r" style="left:343.2px;width:70px;top:332.90px">17.5 mV</div>
<div class="m r" style="left:343.2px;width:70px;top:342.25px">17.5 mV</div>
<div class="m r" style="left:343.2px;width:70px;top:351.60px">17.5 mV</div>
<div class="m r" style="left:343.2px;width:70px;top:360.95px">17.5 mV</div>
<div class="a" style="left:406.2px;top:374.70px;width:6.5px;height:0;border-top:1px dashed #888"></div>
<div class="m r" style="left:343.2px;width:70px;top:379.65px">1</div>
<svg class="a" style="left:407.2px;top:390.50px" width="6" height="6" viewBox="0 0 6 6"><path d="M0.8 3.2 L2.2 4.8 L5.2 1" fill="none" stroke="#20d020" stroke-width="1.2"/></svg>
<div class="m r" style="left:395.5px;width:70px;top:323.55px;color:#eaeaea">SymblEncod</div>
<div class="m r" style="left:395.5px;width:70px;top:332.90px">1.000000000</div>
<div class="m r" style="left:395.5px;width:70px;top:342.25px">1.000000000</div>
<div class="m r" style="left:395.5px;width:70px;top:351.60px">1.000000000</div>
<div class="m r" style="left:395.5px;width:70px;top:360.95px">1.000000000</div>
<div class="a" style="left:458.5px;top:374.70px;width:6.5px;height:0;border-top:1px dashed #888"></div>
<div class="m r" style="left:395.5px;width:70px;top:379.65px">1</div>
<svg class="a" style="left:459.5px;top:390.50px" width="6" height="6" viewBox="0 0 6 6"><path d="M0.8 3.2 L2.2 4.8 L5.2 1" fill="none" stroke="#20d020" stroke-width="1.2"/></svg>
<div class="m r" style="left:446.5px;width:70px;top:323.55px;color:#eaeaea">vSwing</div>
<div class="m r" style="left:446.5px;width:70px;top:332.90px">1.198 V</div>
<div class="m r" style="left:446.5px;width:70px;top:342.25px">1.198 V</div>
<div class="m r" style="left:446.5px;width:70px;top:351.60px">1.198 V</div>
<div class="m r" style="left:446.5px;width:70px;top:360.95px">1.198 V</div>
<div class="a" style="left:509.5px;top:374.70px;width:6.5px;height:0;border-top:1px dashed #888"></div>
<div class="m r" style="left:446.5px;width:70px;top:379.65px">1</div>
<svg class="a" style="left:510.5px;top:390.50px" width="6" height="6" viewBox="0 0 6 6"><path d="M0.8 3.2 L2.2 4.8 L5.2 1" fill="none" stroke="#20d020" stroke-width="1.2"/></svg>
<div class="m r" style="left:498.5px;width:70px;top:323.55px;color:#eaeaea">PS_RDY_L...</div>
<div class="a" style="left:561.5px;top:337.30px;width:6.5px;height:0;border-top:1px dashed #888"></div>
<div class="a" style="left:561.5px;top:346.65px;width:6.5px;height:0;border-top:1px dashed #888"></div>
<div class="a" style="left:561.5px;top:356.00px;width:6.5px;height:0;border-top:1px dashed #888"></div>
<div class="a" style="left:561.5px;top:365.35px;width:6.5px;height:0;border-top:1px dashed #888"></div>
<div class="a" style="left:561.5px;top:374.70px;width:6.5px;height:0;border-top:1px dashed #888"></div>
<div class="m r" style="left:498.5px;width:70px;top:379.65px">0</div>
<div class="m r" style="left:549.5px;width:70px;top:323.55px;color:#4a4a4a">tUnitInterval</div>
<div class="m r" style="left:600.5px;width:70px;top:323.55px;color:#4a4a4a">tUnitInterval</div>
<div class="a" style="left:0;top:398.0px;width:880px;height:57px;background:#000"></div>
<div class="t" style="left:1px;top:398.0px;width:47.5px;height:9.5px;background:#f0f000;color:#000;font-weight:bold;border-right:1px solid #2c2c2c;border-bottom:1px solid #2c2c2c;padding-left:1.5px;overflow:hidden">USB-PD</div>
<div class="t" style="left:48.5px;top:398.0px;width:47.0px;height:9.5px;background:#000;color:#eaeaea;font-weight:bold;border-right:1px solid #2c2c2c;border-bottom:1px solid #2c2c2c;padding-left:1.5px;overflow:hidden">Time</div>
<div class="a" style="left:91.5px;top:402.0px;width:0;height:0;border-left:1.5px solid transparent;border-right:1.5px solid transparent;border-top:1.8px solid #bbb"></div>
<div class="t" style="left:95.5px;top:398.0px;width:35.0px;height:9.5px;background:#000;color:#eaeaea;font-weight:bold;border-right:1px solid #2c2c2c;border-bottom:1px solid #2c2c2c;padding-left:1.5px;overflow:hidden">SOP</div>
<div class="a" style="left:126.5px;top:402.0px;width:0;height:0;border-left:1.5px solid transparent;border-right:1.5px solid transparent;border-top:1.8px solid #bbb"></div>
<div class="t" style="left:130.5px;top:398.0px;width:76.5px;height:9.5px;background:#000;color:#eaeaea;font-weight:bold;border-right:1px solid #2c2c2c;border-bottom:1px solid #2c2c2c;padding-left:1.5px;overflow:hidden">Msg Type</div>
<div class="a" style="left:203.0px;top:402.0px;width:0;height:0;border-left:1.5px solid transparent;border-right:1.5px solid transparent;border-top:1.8px solid #bbb"></div>
<div class="t" style="left:207px;top:398.0px;width:40.5px;height:9.5px;background:#000;color:#eaeaea;font-weight:bold;border-right:1px solid #2c2c2c;border-bottom:1px solid #2c2c2c;padding-left:1.5px;overflow:hidden">Data Role</div>
<div class="a" style="left:243.5px;top:402.0px;width:0;height:0;border-left:1.5px solid transparent;border-right:1.5px solid transparent;border-top:1.8px solid #bbb"></div>
<div class="t" style="left:247.5px;top:398.0px;width:52.5px;height:9.5px;background:#000;color:#eaeaea;font-weight:bold;border-right:1px solid #2c2c2c;border-bottom:1px solid #2c2c2c;padding-left:1.5px;overflow:hidden">Power Role</div>
<div class="a" style="left:296.0px;top:402.0px;width:0;height:0;border-left:1.5px solid transparent;border-right:1.5px solid transparent;border-top:1.8px solid #bbb"></div>
<div class="t" style="left:300px;top:398.0px;width:31px;height:9.5px;background:#000;color:#eaeaea;font-weight:bold;border-right:1px solid #2c2c2c;border-bottom:1px solid #2c2c2c;padding-left:1.5px;overflow:hidden">Msg ID</div>
<div class="a" style="left:327px;top:402.0px;width:0;height:0;border-left:1.5px solid transparent;border-right:1.5px solid transparent;border-top:1.8px solid #bbb"></div>
<div class="t" style="left:331px;top:398.0px;width:40.5px;height:9.5px;background:#000;color:#eaeaea;font-weight:bold;border-right:1px solid #2c2c2c;border-bottom:1px solid #2c2c2c;padding-left:1.5px;overflow:hidden">Obj Count</div>
<div class="a" style="left:367.5px;top:402.0px;width:0;height:0;border-left:1.5px solid transparent;border-right:1.5px solid transparent;border-top:1.8px solid #bbb"></div>
<div class="t" style="left:371.5px;top:398.0px;width:38.5px;height:9.5px;background:#000;color:#eaeaea;font-weight:bold;border-right:1px solid #2c2c2c;border-bottom:1px solid #2c2c2c;padding-left:1.5px;overflow:hidden">Extended</div>
<div class="a" style="left:406.0px;top:402.0px;width:0;height:0;border-left:1.5px solid transparent;border-right:1.5px solid transparent;border-top:1.8px solid #bbb"></div>
<div class="t" style="left:410px;top:398.0px;width:358.5px;height:9.5px;background:#000;color:#eaeaea;font-weight:bold;border-right:1px solid #2c2c2c;border-bottom:1px solid #2c2c2c;padding-left:1.5px;overflow:hidden">Data</div>
<div class="a" style="left:764.5px;top:402.0px;width:0;height:0;border-left:1.5px solid transparent;border-right:1.5px solid transparent;border-top:1.8px solid #bbb"></div>
<div class="t" style="left:768.5px;top:398.0px;width:47.0px;height:9.5px;background:#000;color:#eaeaea;font-weight:bold;border-right:1px solid #2c2c2c;border-bottom:1px solid #2c2c2c;padding-left:1.5px;overflow:hidden">CRC</div>
<div class="a" style="left:811.5px;top:402.0px;width:0;height:0;border-left:1.5px solid transparent;border-right:1.5px solid transparent;border-top:1.8px solid #bbb"></div>
<div class="t" style="left:815.5px;top:398.0px;width:65.0px;height:9.5px;background:#000;color:#eaeaea;font-weight:bold;border-right:1px solid #2c2c2c;border-bottom:1px solid #2c2c2c;padding-left:1.5px;overflow:hidden">Status</div>
<div class="a" style="left:876.5px;top:402.0px;width:0;height:0;border-left:1.5px solid transparent;border-right:1.5px solid transparent;border-top:1.8px solid #bbb"></div>
<div class="t" style="left:1px;top:407.5px;width:47.5px;height:9.5px;background:#000;color:#eaeaea;border-right:1px solid #2c2c2c;border-bottom:1px solid #2c2c2c;padding-left:1.5px;overflow:hidden">14</div>
<div class="t" style="left:48.5px;top:407.5px;width:47.0px;height:9.5px;background:#000;color:#eaeaea;border-right:1px solid #2c2c2c;border-bottom:1px solid #2c2c2c;padding-left:1.5px;overflow:hidden">22.138 ms</div>
<div class="t" style="left:95.5px;top:407.5px;width:35.0px;height:9.5px;background:#000;color:#eaeaea;border-right:1px solid #2c2c2c;border-bottom:1px solid #2c2c2c;padding-left:1.5px;overflow:hidden">SOP</div>
<div class="t" style="left:130.5px;top:407.5px;width:76.5px;height:9.5px;background:#000;color:#eaeaea;border-right:1px solid #2c2c2c;border-bottom:1px solid #2c2c2c;padding-left:1.5px;overflow:hidden">Vendor_Defined</div>
<div class="t" style="left:207px;top:407.5px;width:40.5px;height:9.5px;background:#000;color:#eaeaea;border-right:1px solid #2c2c2c;border-bottom:1px solid #2c2c2c;padding-left:1.5px;overflow:hidden">DFP</div>
<div class="t" style="left:247.5px;top:407.5px;width:52.5px;height:9.5px;background:#000;color:#eaeaea;border-right:1px solid #2c2c2c;border-bottom:1px solid #2c2c2c;padding-left:1.5px;overflow:hidden">Source</div>
<div class="t" style="left:300px;top:407.5px;width:31px;height:9.5px;background:#000;color:#eaeaea;border-right:1px solid #2c2c2c;border-bottom:1px solid #2c2c2c;padding-left:1.5px;overflow:hidden">7</div>
<div class="t" style="left:331px;top:407.5px;width:40.5px;height:9.5px;background:#000;color:#eaeaea;border-right:1px solid #2c2c2c;border-bottom:1px solid #2c2c2c;padding-left:1.5px;overflow:hidden">1</div>
<div class="t" style="left:371.5px;top:407.5px;width:38.5px;height:9.5px;background:#000;color:#eaeaea;border-right:1px solid #2c2c2c;border-bottom:1px solid #2c2c2c;padding-left:1.5px;overflow:hidden">0</div>
<div class="t" style="left:410px;top:407.5px;width:358.5px;height:9.5px;background:#000;color:#eaeaea;border-right:1px solid #2c2c2c;border-bottom:1px solid #2c2c2c;padding-left:1.5px;overflow:hidden">80 01 00 ff</div>
<div class="t" style="left:768.5px;top:407.5px;width:47.0px;height:9.5px;background:#000;color:#eaeaea;border-right:1px solid #2c2c2c;border-bottom:1px solid #2c2c2c;padding-left:1.5px;overflow:hidden">0xcfb391a3</div>
<div class="t" style="left:815.5px;top:407.5px;width:65.0px;height:9.5px;background:#000;color:#eaeaea;border-right:1px solid #2c2c2c;border-bottom:1px solid #2c2c2c;padding-left:1.5px;overflow:hidden"></div>
<div class="t" style="left:1px;top:417.0px;width:47.5px;height:9.5px;background:#000;color:#eaeaea;border-right:1px solid #2c2c2c;border-bottom:1px solid #2c2c2c;padding-left:1.5px;overflow:hidden">15</div>
<div class="t" style="left:48.5px;top:417.0px;width:47.0px;height:9.5px;background:#000;color:#eaeaea;border-right:1px solid #2c2c2c;border-bottom:1px solid #2c2c2c;padding-left:1.5px;overflow:hidden">22.873 ms</div>
<div class="t" style="left:95.5px;top:417.0px;width:35.0px;height:9.5px;background:#000;color:#eaeaea;border-right:1px solid #2c2c2c;border-bottom:1px solid #2c2c2c;padding-left:1.5px;overflow:hidden">SOP</div>
<div class="t" style="left:130.5px;top:417.0px;width:76.5px;height:9.5px;background:#000;color:#eaeaea;border-right:1px solid #2c2c2c;border-bottom:1px solid #2c2c2c;padding-left:1.5px;overflow:hidden">GoodCRC</div>
<div class="t" style="left:207px;top:417.0px;width:40.5px;height:9.5px;background:#000;color:#eaeaea;border-right:1px solid #2c2c2c;border-bottom:1px solid #2c2c2c;padding-left:1.5px;overflow:hidden">UFP</div>
<div class="t" style="left:247.5px;top:417.0px;width:52.5px;height:9.5px;background:#000;color:#eaeaea;border-right:1px solid #2c2c2c;border-bottom:1px solid #2c2c2c;padding-left:1.5px;overflow:hidden">Sink</div>
<div class="t" style="left:300px;top:417.0px;width:31px;height:9.5px;background:#000;color:#eaeaea;border-right:1px solid #2c2c2c;border-bottom:1px solid #2c2c2c;padding-left:1.5px;overflow:hidden">7</div>
<div class="t" style="left:331px;top:417.0px;width:40.5px;height:9.5px;background:#000;color:#eaeaea;border-right:1px solid #2c2c2c;border-bottom:1px solid #2c2c2c;padding-left:1.5px;overflow:hidden">0</div>
<div class="t" style="left:371.5px;top:417.0px;width:38.5px;height:9.5px;background:#000;color:#eaeaea;border-right:1px solid #2c2c2c;border-bottom:1px solid #2c2c2c;padding-left:1.5px;overflow:hidden">0</div>
<div class="t" style="left:410px;top:417.0px;width:358.5px;height:9.5px;background:#000;color:#eaeaea;border-right:1px solid #2c2c2c;border-bottom:1px solid #2c2c2c;padding-left:1.5px;overflow:hidden"></div>
<div class="t" style="left:768.5px;top:417.0px;width:47.0px;height:9.5px;background:#000;color:#eaeaea;border-right:1px solid #2c2c2c;border-bottom:1px solid #2c2c2c;padding-left:1.5px;overflow:hidden">0x4f0341bc</div>
<div class="t" style="left:815.5px;top:417.0px;width:65.0px;height:9.5px;background:#000;color:#eaeaea;border-right:1px solid #2c2c2c;border-bottom:1px solid #2c2c2c;padding-left:1.5px;overflow:hidden"></div>
<div class="t" style="left:1px;top:426.5px;width:47.5px;height:9.5px;background:#b4b41c;color:#fff;border-right:1px solid #b4b41c;border-bottom:1px solid #b4b41c;padding-left:1.5px;overflow:hidden">16</div>
<div class="t" style="left:48.5px;top:426.5px;width:47.0px;height:9.5px;background:#b4b41c;color:#fff;border-right:1px solid #b4b41c;border-bottom:1px solid #b4b41c;padding-left:1.5px;overflow:hidden">26.941 ms</div>
<div class="t" style="left:95.5px;top:426.5px;width:35.0px;height:9.5px;background:#b4b41c;color:#fff;border-right:1px solid #b4b41c;border-bottom:1px solid #b4b41c;padding-left:1.5px;overflow:hidden">SOP</div>
<div class="t" style="left:130.5px;top:426.5px;width:76.5px;height:9.5px;background:#b4b41c;color:#fff;border-right:1px solid #b4b41c;border-bottom:1px solid #b4b41c;padding-left:1.5px;overflow:hidden">Vendor_Defined</div>
<div class="t" style="left:207px;top:426.5px;width:40.5px;height:9.5px;background:#b4b41c;color:#fff;border-right:1px solid #b4b41c;border-bottom:1px solid #b4b41c;padding-left:1.5px;overflow:hidden">UFP</div>
<div class="t" style="left:247.5px;top:426.5px;width:52.5px;height:9.5px;background:#b4b41c;color:#fff;border-right:1px solid #b4b41c;border-bottom:1px solid #b4b41c;padding-left:1.5px;overflow:hidden">Sink</div>
<div class="t" style="left:300px;top:426.5px;width:31px;height:9.5px;background:#b4b41c;color:#fff;border-right:1px solid #b4b41c;border-bottom:1px solid #b4b41c;padding-left:1.5px;overflow:hidden">2</div>
<div class="t" style="left:331px;top:426.5px;width:40.5px;height:9.5px;background:#b4b41c;color:#fff;border-right:1px solid #b4b41c;border-bottom:1px solid #b4b41c;padding-left:1.5px;overflow:hidden">4</div>
<div class="t" style="left:371.5px;top:426.5px;width:38.5px;height:9.5px;background:#b4b41c;color:#fff;border-right:1px solid #b4b41c;border-bottom:1px solid #b4b41c;padding-left:1.5px;overflow:hidden">0</div>
<div class="t" style="left:410px;top:426.5px;width:358.5px;height:9.5px;background:#b4b41c;color:#fff;border-right:1px solid #b4b41c;border-bottom:1px solid #b4b41c;padding-left:1.5px;overflow:hidden">82 01 00 ff 9d 74 00 2b 00 00 00 00 e6 60 e0 c0</div>
<div class="t" style="left:768.5px;top:426.5px;width:47.0px;height:9.5px;background:#b4b41c;color:#fff;border-right:1px solid #b4b41c;border-bottom:1px solid #b4b41c;padding-left:1.5px;overflow:hidden">0x25</div>
<div class="t" style="left:815.5px;top:426.5px;width:65.0px;height:9.5px;background:#b4b41c;color:#fff;border-right:1px solid #b4b41c;border-bottom:1px solid #b4b41c;padding-left:1.5px;overflow:hidden">CRC Error 0x...</div>
<div class="t" style="left:1px;top:436.0px;width:47.5px;height:9.5px;background:#000;color:#eaeaea;border-right:1px solid #2c2c2c;border-bottom:1px solid #2c2c2c;padding-left:1.5px;overflow:hidden">17</div>
<div class="t" style="left:48.5px;top:436.0px;width:47.0px;height:9.5px;background:#000;color:#eaeaea;border-right:1px solid #2c2c2c;border-bottom:1px solid #2c2c2c;padding-left:1.5px;overflow:hidden">28.035 ms</div>
<div class="t" style="left:95.5px;top:436.0px;width:35.0px;height:9.5px;background:#000;color:#eaeaea;border-right:1px solid #2c2c2c;border-bottom:1px solid #2c2c2c;padding-left:1.5px;overflow:hidden">SOP</div>
<div class="t" style="left:130.5px;top:436.0px;width:76.5px;height:9.5px;background:#000;color:#eaeaea;border-right:1px solid #2c2c2c;border-bottom:1px solid #2c2c2c;padding-left:1.5px;overflow:hidden">GoodCRC</div>
<div class="t" style="left:207px;top:436.0px;width:40.5px;height:9.5px;background:#000;color:#eaeaea;border-right:1px solid #2c2c2c;border-bottom:1px solid #2c2c2c;padding-left:1.5px;overflow:hidden">DFP</div>
<div class="t" style="left:247.5px;top:436.0px;width:52.5px;height:9.5px;background:#000;color:#eaeaea;border-right:1px solid #2c2c2c;border-bottom:1px solid #2c2c2c;padding-left:1.5px;overflow:hidden">Source</div>
<div class="t" style="left:300px;top:436.0px;width:31px;height:9.5px;background:#000;color:#eaeaea;border-right:1px solid #2c2c2c;border-bottom:1px solid #2c2c2c;padding-left:1.5px;overflow:hidden">2</div>
<div class="t" style="left:331px;top:436.0px;width:40.5px;height:9.5px;background:#000;color:#eaeaea;border-right:1px solid #2c2c2c;border-bottom:1px solid #2c2c2c;padding-left:1.5px;overflow:hidden">0</div>
<div class="t" style="left:371.5px;top:436.0px;width:38.5px;height:9.5px;background:#000;color:#eaeaea;border-right:1px solid #2c2c2c;border-bottom:1px solid #2c2c2c;padding-left:1.5px;overflow:hidden">0</div>
<div class="t" style="left:410px;top:436.0px;width:358.5px;height:9.5px;background:#000;color:#eaeaea;border-right:1px solid #2c2c2c;border-bottom:1px solid #2c2c2c;padding-left:1.5px;overflow:hidden"></div>
<div class="t" style="left:768.5px;top:436.0px;width:47.0px;height:9.5px;background:#000;color:#eaeaea;border-right:1px solid #2c2c2c;border-bottom:1px solid #2c2c2c;padding-left:1.5px;overflow:hidden">0x4d55bc96</div>
<div class="t" style="left:815.5px;top:436.0px;width:65.0px;height:9.5px;background:#000;color:#eaeaea;border-right:1px solid #2c2c2c;border-bottom:1px solid #2c2c2c;padding-left:1.5px;overflow:hidden"></div>
<div class="t" style="left:1px;top:445.5px;width:47.5px;height:9.5px;background:#000;color:#eaeaea;border-right:1px solid #2c2c2c;border-bottom:1px solid #2c2c2c;padding-left:1.5px;overflow:hidden">18</div>
<div class="t" style="left:48.5px;top:445.5px;width:47.0px;height:9.5px;background:#000;color:#eaeaea;border-right:1px solid #2c2c2c;border-bottom:1px solid #2c2c2c;padding-left:1.5px;overflow:hidden">46.766 ms</div>
<div class="t" style="left:95.5px;top:445.5px;width:35.0px;height:9.5px;background:#000;color:#eaeaea;border-right:1px solid #2c2c2c;border-bottom:1px solid #2c2c2c;padding-left:1.5px;overflow:hidden">SOP</div>
<div class="t" style="left:130.5px;top:445.5px;width:76.5px;height:9.5px;background:#000;color:#eaeaea;border-right:1px solid #2c2c2c;border-bottom:1px solid #2c2c2c;padding-left:1.5px;overflow:hidden">Vendor_Defined</div>
<div class="t" style="left:207px;top:445.5px;width:40.5px;height:9.5px;background:#000;color:#eaeaea;border-right:1px solid #2c2c2c;border-bottom:1px solid #2c2c2c;padding-left:1.5px;overflow:hidden">DFP</div>
<div class="t" style="left:247.5px;top:445.5px;width:52.5px;height:9.5px;background:#000;color:#eaeaea;border-right:1px solid #2c2c2c;border-bottom:1px solid #2c2c2c;padding-left:1.5px;overflow:hidden">Source</div>
<div class="t" style="left:300px;top:445.5px;width:31px;height:9.5px;background:#000;color:#eaeaea;border-right:1px solid #2c2c2c;border-bottom:1px solid #2c2c2c;padding-left:1.5px;overflow:hidden">0</div>
<div class="t" style="left:331px;top:445.5px;width:40.5px;height:9.5px;background:#000;color:#eaeaea;border-right:1px solid #2c2c2c;border-bottom:1px solid #2c2c2c;padding-left:1.5px;overflow:hidden">1</div>
<div class="t" style="left:371.5px;top:445.5px;width:38.5px;height:9.5px;background:#000;color:#eaeaea;border-right:1px solid #2c2c2c;border-bottom:1px solid #2c2c2c;padding-left:1.5px;overflow:hidden">0</div>
<div class="t" style="left:410px;top:445.5px;width:358.5px;height:9.5px;background:#000;color:#eaeaea;border-right:1px solid #2c2c2c;border-bottom:1px solid #2c2c2c;padding-left:1.5px;overflow:hidden">40 01 00 ff</div>
<div class="t" style="left:768.5px;top:445.5px;width:47.0px;height:9.5px;background:#000;color:#eaeaea;border-right:1px solid #2c2c2c;border-bottom:1px solid #2c2c2c;padding-left:1.5px;overflow:hidden">0x6236802c</div>
<div class="t" style="left:815.5px;top:445.5px;width:65.0px;height:9.5px;background:#000;color:#eaeaea;border-right:1px solid #2c2c2c;border-bottom:1px solid #2c2c2c;padding-left:1.5px;overflow:hidden"></div>
<div class="a" style="left:875px;top:430px;width:0;height:0;border-left:4px solid transparent;border-bottom:4px solid #fff"></div>
<div class="a" style="left:881px;top:399.5px;width:15.5px;height:56px;background:#262626;border:1px solid #5a5a5a"></div>
<div class="a" style="left:882px;top:400.5px;width:13.5px;height:11.5px;background:#505050"></div>
<div class="a" style="left:882px;top:443px;width:13.5px;height:11.5px;background:#505050"></div>
<div class="a" style="left:882px;top:413px;width:13.5px;height:20px;background:#3e3e3e"></div>
<div class="a" style="left:882px;top:433.5px;width:13.5px;height:6px;background:repeating-linear-gradient(#8a8a8a 0 1px,#4a4a4a 1px 2px)"></div>
<div class="a" style="left:883.2px;top:403px;width:0;height:0;border-left:5.5px solid transparent;border-right:5.5px solid transparent;border-bottom:6px solid #fff"></div>
<div class="a" style="left:883.2px;top:446px;width:0;height:0;border-left:5.5px solid transparent;border-right:5.5px solid transparent;border-top:6px solid #fff"></div>
<div class="a" style="left:1.7px;top:456.7px;width:57.2px;height:37.5px;background:#4c4c4c;"></div>
<div class="a" style="left:1.7px;top:456.7px;width:57.2px;height:8.8px;background:#f0f000"></div>
<div class="a" style="left:3px;top:457.6px;font-size:7.5px;color:#000">C1</div><div class="a" style="left:21.7px;top:457.5px;width:13.6px;height:7.5px;background:#000;color:#f0f000;font-size:5.8px;line-height:7.5px;text-align:center;font-weight:bold;border-radius:1.5px">FLT</div><div class="a" style="left:37px;top:457.5px;width:20.8px;height:7.5px;background:#000;color:#f0f000;font-size:5.8px;line-height:7.5px;text-align:center;font-weight:bold;border-radius:1.5px">DC1M</div>
<div class="m r" style="left:1.7px;width:56.400000000000006px;top:466.6px;line-height:9px;color:#fff">500 mV/div</div>
<div class="m r" style="left:1.7px;width:56.400000000000006px;top:475.2px;line-height:9px;color:#fff">-1.18501 V</div>
<div class="a" style="left:60.5px;top:456.7px;width:57.5px;height:37.5px;background:#2a4c6c;border:1px solid #38a0e0;border-bottom-color:#30c0c0;"></div>
<div class="a" style="left:60.5px;top:456.7px;width:57.5px;height:8.8px;background:#f0f000"></div>
<div class="a" style="left:62.5px;top:457.6px;font-size:7.5px;color:#000">Z1</div><div class="a r" style="left:60px;width:57px;top:457.6px;font-size:7.5px;color:#000">zoom(C1)</div>
<div class="m r" style="left:60.5px;width:56.7px;top:466.6px;line-height:9px;color:#fff">500 mV/div</div>
<div class="m r" style="left:60.5px;width:56.7px;top:475.2px;line-height:9px;color:#fff">112 µs/div</div>
<div class="a" style="left:119.4px;top:456.7px;width:57px;height:37.5px;background:#4c4c4c;"></div>
<div class="a" style="left:119.4px;top:456.7px;width:57px;height:8.8px;background:#f0f000"></div>
<div class="a" style="left:120.6px;top:457.6px;font-size:7.5px;color:#000">USBPDEyeE...</div>
<div class="m r" style="left:119.4px;width:56.2px;top:466.6px;line-height:9px;color:#fff">275 mV/div</div>
<div class="m r" style="left:119.4px;width:56.2px;top:475.2px;line-height:9px;color:#fff">560 ns/div</div>
<div class="m r" style="left:119.4px;width:56.2px;top:483.8px;line-height:9px;color:#fff">308 #</div>
<svg class="a" style="left:177.3px;top:456.2px" width="60" height="39"><rect x="0.5" y="0.5" width="57.7" height="37.5" fill="none" stroke="#aaa" stroke-width="1" stroke-dasharray="2 1.5"/></svg>
<div class="a" style="left:202.6px;top:470.8px;font-size:10px;line-height:10px;color:#fff">+</div>
<div class="a" style="left:736px;top:456.5px;width:34px;height:7px;background:#10e010"></div>
<div class="a" style="left:736px;top:463.5px;width:33.5px;height:21.5px;background:#4c4c4c"></div>
<div class="a" style="left:770.5px;top:456.5px;width:66px;height:28.5px;background:#4c4c4c"></div>
<div class="a" style="left:837.5px;top:456.5px;width:60px;height:28.5px;background:#4c4c4c"></div>
<div class="a" style="left:770.5px;top:456.5px;width:127px;height:7px;background:#e8e8e8"></div>
<div class="a" style="left:882.5px;top:457.5px;width:14.5px;height:7px;background:#000;color:#eee;font-size:5.4px;line-height:6px;text-align:center;border:0.6px solid #ddd">DC</div>
<div class="m" style="left:772px;top:457px;color:#222;font-size:7px;line-height:7px">Timebase</div>
<div class="m" style="left:813px;top:457px;color:#222;font-size:7px;line-height:7px">0 ms</div>
<div class="m" style="left:839px;top:457px;color:#222;font-size:7px;line-height:7px">Trigger</div>
<div class="m" style="left:741px;top:470px;color:#fff">12 Bits</div>
<div class="m r" style="left:771px;width:64px;top:466px;color:#fff">10.0 ms/div</div>
<div class="m" style="left:773px;top:475.5px;color:#fff">5 MS</div>
<div class="m r" style="left:771px;width:64px;top:475.5px;color:#fff">50 MS/s</div>
<div class="m" style="left:839.5px;top:466px;color:#fff">Stop</div>
<div class="m r" style="left:838px;width:58px;top:466px;color:#fff">600 mV</div>
<div class="m" style="left:839.5px;top:475.5px;color:#fff">USB-PD</div>
<div class="a" style="left:0;top:495.5px;width:900px;height:1px;background:#333"></div>
<div class="a" style="left:2.6px;top:497px;font-size:7.1px;line-height:8px;color:#fff;letter-spacing:0px"><b>TELEDYNE</b> LECROY</div>
<div class="a r" style="left:780px;width:113px;top:496.5px;font-size:7.5px;line-height:9px;color:#eee">7/30/2021 6:43:13 PM</div>
<svg class="a" style="left:584px;top:443px" width="46" height="40" viewBox="584 443 46 40"><ellipse cx="600.5" cy="457.4" rx="13.6" ry="11.5" fill="#dcdcdc"/><path d="M592 466 L590.5 471.8 L597.5 468 Z" fill="#dcdcdc"/><ellipse cx="613.8" cy="466.8" rx="12.4" ry="10.8" fill="#000"/><ellipse cx="613.8" cy="466.8" rx="11.4" ry="9.9" fill="#dcdcdc"/><path d="M618.5 475 L623 479 L615 476.5 Z" fill="#dcdcdc"/><circle cx="596" cy="453.7" r="1.8" fill="#000"/><circle cx="606.4" cy="453.7" r="1.8" fill="#000"/><circle cx="609.4" cy="463.5" r="1.55" fill="#000"/><circle cx="617.8" cy="463.5" r="1.55" fill="#000"/></svg>
<div class="a" style="left:632.2px;top:449.5px;font-size:22.2px;line-height:28px;color:#f2f2f2;text-shadow:0 0 2px #000,0 0 1px #000;font-weight:300">微信号:<span style="font-size:23px;letter-spacing:0.25px;margin-left:4.2px;font-weight:400">TeledyneLecroy</span></div>
</body></html>
